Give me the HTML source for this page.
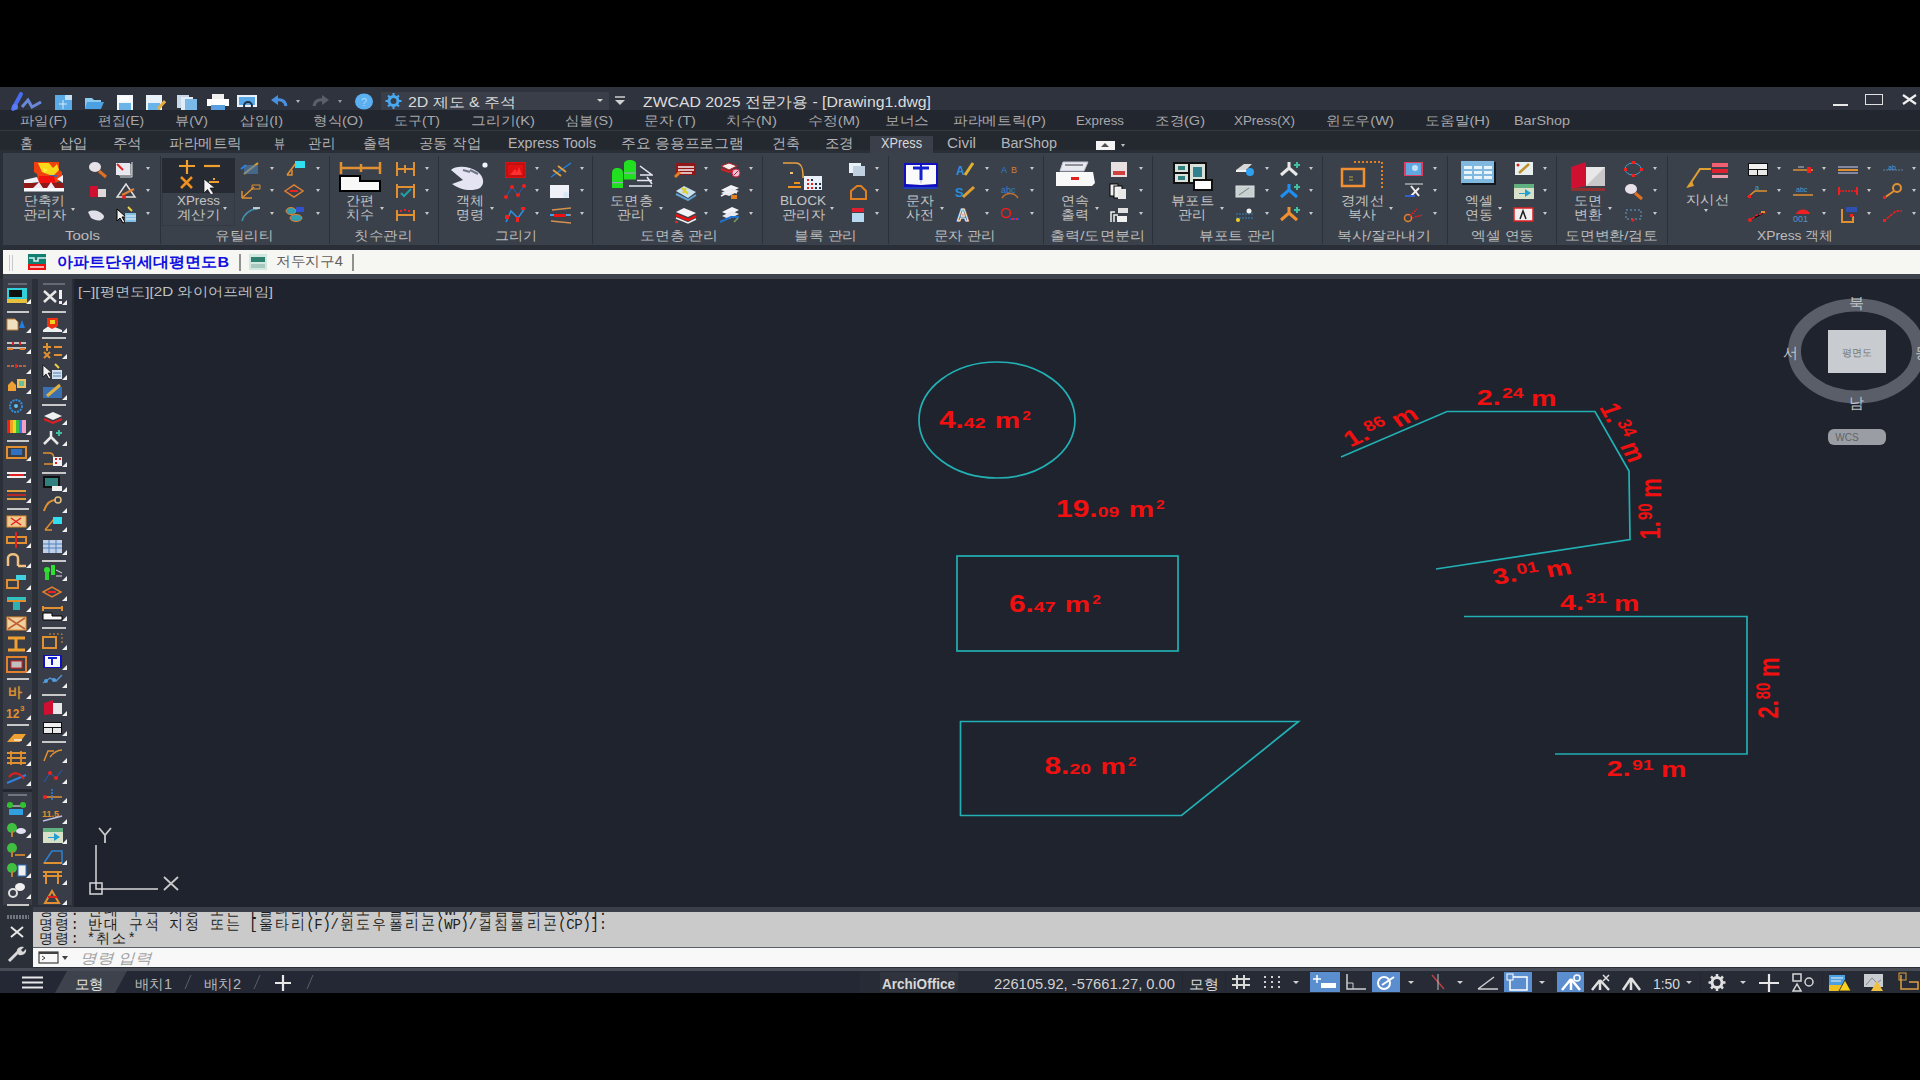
<!DOCTYPE html>
<html><head><meta charset="utf-8"><style>*{margin:0;padding:0;box-sizing:border-box}
html,body{width:1920px;height:1080px;overflow:hidden;background:#000}
body{position:relative;font-family:"Liberation Sans",sans-serif}
.a{position:absolute;display:block}
.t{position:absolute;white-space:nowrap;transform-origin:0 50%}
</style></head><body><div class="a" style="left:0px;top:87px;width:1920px;height:23px;background:#2f333d;"></div><div class="a" style="left:0px;top:110px;width:1920px;height:20px;background:#22262e;"></div><div class="a" style="left:0px;top:130px;width:1920px;height:1px;background:#343a40;"></div><div class="a" style="left:0px;top:131px;width:1920px;height:22px;background:#24282f;"></div><div class="a" style="left:0px;top:150px;width:1920px;height:3px;background:#2a2e36;"></div><div class="a" style="left:0px;top:153px;width:1920px;height:93px;background:#3b414b;"></div><div class="a" style="left:0px;top:153px;width:3px;height:93px;background:#2a2e36;"></div><div class="a" style="left:0px;top:245px;width:1920px;height:5px;background:#2a2e36;"></div><div class="a" style="left:3px;top:250px;width:1917px;height:24px;background:#f6f6f2;"></div><div class="a" style="left:0px;top:250px;width:3px;height:657px;background:#262a32;"></div><div class="a" style="left:3px;top:274px;width:1917px;height:5px;background:#3e424c;"></div><div class="a" style="left:0px;top:279px;width:74px;height:628px;background:#2b2f38;"></div><div class="a" style="left:74px;top:279px;width:1846px;height:628px;background:#1e232d;"></div><div class="a" style="left:0px;top:907px;width:1920px;height:64px;background:#3a3e48;"></div><div class="a" style="left:0px;top:907px;width:33px;height:64px;background:#2b2f38;"></div><div class="a" style="left:33px;top:912px;width:1887px;height:35px;background:#cacaca;"></div><div class="a" style="left:33px;top:947px;width:1887px;height:1px;background:#5a5e66;"></div><div class="a" style="left:33px;top:948px;width:1887px;height:19px;background:#f8f8f8;"></div><div class="a" style="left:0px;top:967px;width:1920px;height:1px;background:#2a2e36;"></div><div class="a" style="left:0px;top:968px;width:1920px;height:3px;background:#484c56;"></div><div class="a" style="left:0px;top:971px;width:1920px;height:22px;background:#232834;"></div><svg class="a" style="left:8px;top:90px;" width="36" height="22" viewBox="0 0 36 22"><path d="M5 19L13 4" stroke="#4a6cf0" stroke-width="4" stroke-linecap="round"/><circle cx="7" cy="17" r="3" fill="#5a7cf8"/><path d="M14 17L20 10L24 17L33 12" stroke="#6a88d8" stroke-width="3" fill="none"/></svg><svg class="a" style="left:55px;top:95px;" width="18" height="15" viewBox="0 0 18 15"><rect x="0" y="0" width="17" height="16" fill="#5aaae8"/><rect x="10" y="0" width="7" height="5" fill="#bfe0f8"/><path d="M8 5V14M4 9H12" stroke="#d8ecf8" stroke-width="1"/></svg><svg class="a" style="left:84px;top:96px;" width="21" height="14" viewBox="0 0 21 14"><path d="M1 2H8L10 4H17V13H1Z" fill="#8ccaf0"/><path d="M3 6H20L17 13H1Z" fill="#4aa0e0"/></svg><svg class="a" style="left:117px;top:95px;" width="17" height="15" viewBox="0 0 17 15"><rect x="0" y="0" width="16" height="16" fill="#f4f8fc"/><rect x="2" y="8" width="12" height="8" fill="#6ab4e8"/><rect x="3" y="1" width="9" height="5" fill="#ffffff"/></svg><svg class="a" style="left:146px;top:95px;" width="20" height="15" viewBox="0 0 20 15"><rect x="0" y="0" width="16" height="16" fill="#e8f0f8"/><rect x="2" y="8" width="12" height="8" fill="#6ab4e8"/><path d="M12 14L19 6" stroke="#e8b040" stroke-width="3"/></svg><svg class="a" style="left:177px;top:95px;" width="21" height="15" viewBox="0 0 21 15"><rect x="0" y="0" width="12" height="13" fill="#c8d8e8"/><rect x="4" y="2" width="12" height="13" fill="#e0ecf8"/><rect x="8" y="4" width="12" height="12" fill="#7ab8e8"/></svg><svg class="a" style="left:207px;top:94px;" width="22" height="16" viewBox="0 0 22 16"><rect x="5" y="0" width="12" height="6" fill="#f0f0f0"/><rect x="0" y="5" width="22" height="7" fill="#ffffff"/><rect x="4" y="11" width="14" height="6" fill="#5aa0e0"/></svg><svg class="a" style="left:237px;top:94px;" width="21" height="17" viewBox="0 0 21 17"><rect x="0" y="1" width="20" height="12" fill="#e8f0f8"/><rect x="2" y="3" width="16" height="8" fill="#5aa8e8"/><circle cx="11" cy="12" r="4" fill="none" stroke="#203040" stroke-width="2"/><path d="M14 15L17 18" stroke="#203040" stroke-width="2"/></svg><svg class="a" style="left:271px;top:94px;" width="17" height="14" viewBox="0 0 17 14"><path d="M15 12C14 6 9 5 5 6" stroke="#4a90e0" stroke-width="3" fill="none"/><path d="M0 6L7 1V11Z" fill="#4a90e0"/></svg><svg class="a" style="left:296px;top:100px;" width="4" height="4" viewBox="0 0 4 4"><path d="M0 0H4L2 3Z" fill="#b8b8b8"/></svg><svg class="a" style="left:312px;top:94px;" width="17" height="14" viewBox="0 0 17 14"><path d="M2 12C3 6 8 5 12 6" stroke="#5a6068" stroke-width="3" fill="none"/><path d="M17 6L10 1V11Z" fill="#5a6068"/></svg><svg class="a" style="left:338px;top:100px;" width="4" height="4" viewBox="0 0 4 4"><path d="M0 0H4L2 3Z" fill="#9a9a9a"/></svg><svg class="a" style="left:354px;top:93px;" width="20" height="17" viewBox="0 0 20 17"><ellipse cx="10" cy="8.5" rx="9" ry="8" fill="#5ab0f0"/><text x="10" y="13" font-size="11" text-anchor="middle" fill="#a0d8ff" font-family="Liberation Sans">?</text></svg><div class="a" style="left:381px;top:92px;width:228px;height:18px;background:#393e48;"></div><svg class="a" style="left:385px;top:93px;" width="17" height="16" viewBox="0 0 17 16"><circle cx="8.5" cy="8" r="4.5" fill="none" stroke="#4aa8f0" stroke-width="3"/><path d="M8.5 0V3M8.5 13V16M0.5 8H3.5M13.5 8H16.5M3 2.5L5 4.5M12 11.5L14 13.5M3 13.5L5 11.5M12 4.5L14 2.5" stroke="#4aa8f0" stroke-width="2"/></svg><svg class="a" style="left:597px;top:99px;" width="6" height="4" viewBox="0 0 6 4"><path d="M0 0H6L3 3Z" fill="#d0d0d0"/></svg><svg class="a" style="left:614px;top:96px;" width="12" height="10" viewBox="0 0 12 10"><path d="M1 1H11" stroke="#d0d0d0" stroke-width="1.5"/><path d="M1 4H11L6 9Z" fill="#d0d0d0"/></svg><div class="a" style="left:1833px;top:104px;width:15px;height:2px;background:#e8e8e8;"></div><div class="a" style="left:1865px;top:94px;width:18px;height:11px;background:transparent;border:1.5px solid #e0e0e0"></div><svg class="a" style="left:1902px;top:94px;" width="15" height="11" viewBox="0 0 15 11"><path d="M1 1L14 10M14 1L1 10" stroke="#f0f0f0" stroke-width="2.2"/></svg><div class="a" style="left:870px;top:136px;width:63px;height:17px;background:#3b3f49;"></div><div class="a" style="left:1096px;top:141px;width:19px;height:9px;background:#f4f4f4;"></div><svg class="a" style="left:1101px;top:143px;" width="9" height="5" viewBox="0 0 9 5"><path d="M0 4H8L4 0Z" fill="#505050"/></svg><svg class="a" style="left:1121px;top:144px;" width="4" height="4" viewBox="0 0 4 4"><path d="M0 0H4L2 3Z" fill="#c0c0c0"/></svg><div class="a" style="left:160px;top:156px;width:1px;height:88px;background:#2c3038;"></div><div class="a" style="left:329px;top:156px;width:1px;height:88px;background:#2c3038;"></div><div class="a" style="left:438px;top:156px;width:1px;height:88px;background:#2c3038;"></div><div class="a" style="left:592px;top:156px;width:1px;height:88px;background:#2c3038;"></div><div class="a" style="left:762px;top:156px;width:1px;height:88px;background:#2c3038;"></div><div class="a" style="left:888px;top:156px;width:1px;height:88px;background:#2c3038;"></div><div class="a" style="left:1043px;top:156px;width:1px;height:88px;background:#2c3038;"></div><div class="a" style="left:1152px;top:156px;width:1px;height:88px;background:#2c3038;"></div><div class="a" style="left:1322px;top:156px;width:1px;height:88px;background:#2c3038;"></div><div class="a" style="left:1447px;top:156px;width:1px;height:88px;background:#2c3038;"></div><div class="a" style="left:1556px;top:156px;width:1px;height:88px;background:#2c3038;"></div><div class="a" style="left:1667px;top:156px;width:1px;height:88px;background:#2c3038;"></div><svg class="a" style="left:23px;top:160px;" width="42" height="32" viewBox="0 0 42 32"><path d="M11 2H36V10L39 12V20L30 24L16 24L14 14L11 12Z" fill="#f04010"/><path d="M15 3H26L30 8L34 4L36 10L30 16L24 14L19 12Z" fill="#f8d818"/><path d="M20 8L25 10L21 13Z" fill="#f8f040"/><rect x="26" y="15" width="8" height="2" fill="#5060a0"/><path d="M16 16H31L33 24H15Z" fill="#f01010"/><path d="M1 20L14 17L16 22L1 24Z" fill="#f0f0f8"/><path d="M34 19L40 15V23Z" fill="#f0f0f8"/><path d="M1 23H41V28H1Z" fill="#901818"/><path d="M10 28L16 22L20 28ZM24 28L28 22L32 28Z" fill="#f0e8f0"/><rect x="1" y="28" width="40" height="3.5" fill="#f8f8ff"/></svg><svg class="a" style="left:71px;top:208px;" width="4" height="4" viewBox="0 0 4 4"><path d="M0 0H4L2 3Z" fill="#c8c8c8"/></svg><div class="a" style="left:162px;top:158px;width:73px;height:35px;background:#262a32;"></div><div class="a" style="left:162px;top:193px;width:73px;height:33px;background:transparent;border:1px solid #343841;border-top:none"></div><svg class="a" style="left:176px;top:160px;" width="46" height="34" viewBox="0 0 46 34"><path d="M3 6H19M11 0V14" stroke="#f0a030" stroke-width="2.2"/><path d="M28 6H44" stroke="#f0a030" stroke-width="2.2"/><path d="M5 17L16 28M16 17L5 28" stroke="#f09020" stroke-width="2.5"/><path d="M33 22H43M37 19h2" stroke="#f0a030" stroke-width="2"/><path d="M28 19L28 33L31.5 29.5L35 35L37.5 33.5L34 28L39 28Z" fill="#f4f4f8" stroke="#101010" stroke-width="0.7"/></svg><svg class="a" style="left:223px;top:207px;" width="4" height="4" viewBox="0 0 4 4"><path d="M0 0H4L2 3Z" fill="#c8c8c8"/></svg><svg class="a" style="left:339px;top:160px;" width="43" height="32" viewBox="0 0 43 32"><path d="M2 2V14M41 2V14M22 4V12M2 8H41" stroke="#e09030" stroke-width="2.5"/><path d="M1 16H21V21H41V31H1Z" fill="#f8f8f8" stroke="#000" stroke-width="2"/></svg><svg class="a" style="left:380px;top:207px;" width="4" height="4" viewBox="0 0 4 4"><path d="M0 0H4L2 3Z" fill="#c8c8c8"/></svg><svg class="a" style="left:450px;top:162px;" width="40" height="30" viewBox="0 0 40 30"><path d="M1 8C6 3 20 4 28 10C34 15 35 22 30 26C22 30 10 28 2 22L13 18Z" fill="#e4e4f2"/><path d="M13 8L20 10M20 8L28 12" stroke="#707888" stroke-width="2"/><circle cx="35" cy="3" r="2.6" fill="#f4f4ff"/></svg><svg class="a" style="left:490px;top:207px;" width="4" height="4" viewBox="0 0 4 4"><path d="M0 0H4L2 3Z" fill="#c8c8c8"/></svg><svg class="a" style="left:611px;top:160px;" width="42" height="30" viewBox="0 0 42 30"><path d="M1 13C1 9 4 8 6 8C9 8 12 9 12 13V28H1Z" fill="#20e020"/><rect x="1" y="22" width="11" height="1.2" fill="#a0a0c0"/><path d="M13 4C13 1 16 0 19 0C22 0 25 1 25 4V19.5H13Z" fill="#20e020"/><rect x="13" y="12.5" width="12" height="1.2" fill="#a0a0c0"/><path d="M29 6L41 15H29M26 20.5H41M36 17L41 24M18 26H41" stroke="#e8e8f4" stroke-width="1.5" fill="none"/></svg><svg class="a" style="left:659px;top:207px;" width="4" height="4" viewBox="0 0 4 4"><path d="M0 0H4L2 3Z" fill="#c8c8c8"/></svg><svg class="a" style="left:782px;top:161px;" width="42" height="31" viewBox="0 0 42 31"><path d="M1 2H14C19 2 21 8 21 14V17" stroke="#e8a040" stroke-width="1.6" fill="none"/><path d="M8 12H11" stroke="#f0c080" stroke-width="2"/><path d="M12 22H18M6 26H19" stroke="#f09020" stroke-width="2"/><rect x="22" y="15" width="18" height="14" fill="#e8f0fc"/><path d="M25 18h2v2h-2zM25 22h2v2h-2zM29 22h2v2h-2zM25 26h2v2h-2zM29 26h2v2h-2z" fill="#f02020"/><path d="M29 18h2v2h-2zM33 22h2v2h-2zM37 22h2v2h-2zM33 26h2v2h-2zM37 26h2v2h-2z" fill="#203040"/></svg><svg class="a" style="left:830px;top:207px;" width="4" height="4" viewBox="0 0 4 4"><path d="M0 0H4L2 3Z" fill="#c8c8c8"/></svg><svg class="a" style="left:903px;top:162px;" width="36" height="28" viewBox="0 0 36 28"><rect x="1" y="1" width="34" height="24" fill="#1010c0"/><path d="M3 3H17L18 23L3 22ZM19 3H33V22L18 23Z" fill="#fafafa"/><path d="M10 6H26M18 6V18" stroke="#1020d0" stroke-width="3"/><path d="M1 26H35" stroke="#2040c0" stroke-width="2"/></svg><svg class="a" style="left:940px;top:207px;" width="4" height="4" viewBox="0 0 4 4"><path d="M0 0H4L2 3Z" fill="#c8c8c8"/></svg><svg class="a" style="left:1055px;top:161px;" width="40" height="26" viewBox="0 0 40 26"><path d="M8 1H33L29 10H5Z" fill="#e8e8f0" stroke="#c0c0d0"/><path d="M10 4H28" stroke="#909098" stroke-width="2"/><path d="M1 11H38L40 22L37 25H1Z" fill="#f8f8f8"/><rect x="16" y="16" width="8" height="3" fill="#e02020"/></svg><svg class="a" style="left:1095px;top:207px;" width="4" height="4" viewBox="0 0 4 4"><path d="M0 0H4L2 3Z" fill="#c8c8c8"/></svg><svg class="a" style="left:1172px;top:161px;" width="42" height="31" viewBox="0 0 42 31"><rect x="1" y="1" width="34" height="22" fill="#101010"/><rect x="3" y="3" width="13" height="8" fill="#d8e0d8"/><rect x="3" y="13" width="13" height="8" fill="#d8e0d8"/><rect x="18" y="3" width="15" height="18" fill="#d8e0d8"/><rect x="6" y="5" width="7" height="4" fill="#308080"/><rect x="6" y="15" width="7" height="4" fill="#308080"/><rect x="21" y="6" width="9" height="10" fill="#308090"/><rect x="21" y="18" width="20" height="12" fill="#101010"/><rect x="23" y="20" width="16" height="8" fill="#ffffff"/></svg><svg class="a" style="left:1220px;top:207px;" width="4" height="4" viewBox="0 0 4 4"><path d="M0 0H4L2 3Z" fill="#c8c8c8"/></svg><svg class="a" style="left:1340px;top:161px;" width="43" height="30" viewBox="0 0 43 30"><path d="M14 1H42V27" stroke="#e08020" stroke-width="2" stroke-dasharray="2 2" fill="none"/><rect x="2" y="8" width="22" height="17" fill="none" stroke="#f09030" stroke-width="2.5"/><path d="M9 16H13M9 19H13" stroke="#c0a040" stroke-width="1"/></svg><svg class="a" style="left:1389px;top:207px;" width="4" height="4" viewBox="0 0 4 4"><path d="M0 0H4L2 3Z" fill="#c8c8c8"/></svg><svg class="a" style="left:1461px;top:161px;" width="37" height="26" viewBox="0 0 37 26"><rect x="1" y="1" width="34" height="23" fill="#101820"/><rect x="0" y="0" width="33" height="22" fill="#80b8e0"/><path d="M3 5h8v3h-8zM13 5h8v3h-8zM23 5h8v3h-8zM3 10h8v3h-8zM13 10h8v3h-8zM23 10h8v3h-8zM3 15h8v3h-8zM13 15h8v3h-8zM23 15h8v3h-8z" fill="#e8f4fc"/></svg><svg class="a" style="left:1498px;top:207px;" width="4" height="4" viewBox="0 0 4 4"><path d="M0 0H4L2 3Z" fill="#c8c8c8"/></svg><svg class="a" style="left:1569px;top:161px;" width="38" height="30" viewBox="0 0 38 30"><path d="M2 6L17 1V25L2 28Z" fill="#d01030"/><path d="M17 6H36V25H17Z" fill="#e8e8e8"/><path d="M17 25L36 6V25Z" fill="#c8c8c8"/><path d="M2 27H36V30H2Z" fill="#903030"/></svg><svg class="a" style="left:1608px;top:207px;" width="4" height="4" viewBox="0 0 4 4"><path d="M0 0H4L2 3Z" fill="#c8c8c8"/></svg><svg class="a" style="left:1685px;top:161px;" width="44" height="29" viewBox="0 0 44 29"><path d="M3 26L15 8H26" stroke="#e0a030" stroke-width="2" fill="none"/><path d="M1 27L7 20L9 25Z" fill="#e0a030"/><rect x="27" y="2" width="16" height="4" fill="#f06070"/><rect x="27" y="8" width="16" height="4" fill="#e02030"/><rect x="27" y="14" width="16" height="3" fill="#f0a0b0"/></svg><svg class="a" style="left:1704px;top:209px;" width="4" height="4" viewBox="0 0 4 4"><path d="M0 0H4L2 3Z" fill="#c8c8c8"/></svg><svg class="a" style="left:87px;top:161px;" width="23" height="18" viewBox="0 0 23 18"><ellipse cx="8" cy="6" rx="6" ry="5" fill="#e8e0e8"/><path d="M12 10L19 16" stroke="#e07020" stroke-width="3"/></svg><svg class="a" style="left:87px;top:183px;" width="23" height="18" viewBox="0 0 23 18"><rect x="3" y="3" width="8" height="11" fill="#d01030"/><rect x="11" y="6" width="8" height="8" fill="#e0d8d8"/></svg><svg class="a" style="left:87px;top:206px;" width="23" height="18" viewBox="0 0 23 18"><path d="M1 6C6 3 14 5 17 10C17 15 10 16 4 12Z" fill="#e0e0e8"/></svg><svg class="a" style="left:116px;top:161px;" width="23" height="18" viewBox="0 0 23 18"><rect x="0" y="2" width="14" height="12" fill="#e8e8f0"/><path d="M1 3L7 9" stroke="#e02020" stroke-width="2"/><path d="M15 3V14H3" stroke="#f0f0f0" stroke-width="1" fill="none"/><path d="M16 1V16H4" stroke="#e0e0e0" stroke-width="1" fill="none"/></svg><svg class="a" style="left:146px;top:167px;" width="4" height="4" viewBox="0 0 4 4"><path d="M0 0H4L2 3Z" fill="#c8c8c8"/></svg><svg class="a" style="left:116px;top:183px;" width="23" height="18" viewBox="0 0 23 18"><path d="M10 1L1 14H19Z" fill="none" stroke="#e0e0e0" stroke-width="1.5"/><path d="M6 12L18 6" stroke="#e08030" stroke-width="2"/><circle cx="8" cy="14" r="2" fill="#e02020"/></svg><svg class="a" style="left:146px;top:189px;" width="4" height="4" viewBox="0 0 4 4"><path d="M0 0H4L2 3Z" fill="#c8c8c8"/></svg><svg class="a" style="left:116px;top:206px;" width="23" height="18" viewBox="0 0 23 18"><path d="M1 3V15L4 12L7 17L9 16L6 11H10Z" fill="#f0f0f0" stroke="#000"/><rect x="9" y="7" width="11" height="9" fill="#80c0e8"/><path d="M10 10H20M10 13H20" stroke="#f0f0f0"/><path d="M12 1L16 5" stroke="#f0d040" stroke-width="2"/></svg><svg class="a" style="left:146px;top:212px;" width="4" height="4" viewBox="0 0 4 4"><path d="M0 0H4L2 3Z" fill="#c8c8c8"/></svg><svg class="a" style="left:240px;top:161px;" width="23" height="18" viewBox="0 0 23 18"><path d="M1 8L6 4" stroke="#2080f0" stroke-width="2"/><path d="M4 13L18 2" stroke="#e0a030" stroke-width="2"/><rect x="4" y="4" width="14" height="9" fill="#5080b0" opacity=".6"/></svg><svg class="a" style="left:270px;top:167px;" width="4" height="4" viewBox="0 0 4 4"><path d="M0 0H4L2 3Z" fill="#c8c8c8"/></svg><svg class="a" style="left:240px;top:183px;" width="23" height="18" viewBox="0 0 23 18"><path d="M2 15L14 4" stroke="#e09030" stroke-width="1.5"/><path d="M2 15H12M2 15V8" stroke="#e09030" stroke-width="1.5" fill="none"/><path d="M12 2H20V6H12Z" fill="none" stroke="#e09030"/></svg><svg class="a" style="left:270px;top:189px;" width="4" height="4" viewBox="0 0 4 4"><path d="M0 0H4L2 3Z" fill="#c8c8c8"/></svg><svg class="a" style="left:240px;top:206px;" width="23" height="18" viewBox="0 0 23 18"><path d="M2 15C4 8 10 3 18 3" stroke="#4090b0" stroke-width="1.5" fill="none"/><path d="M13 2H20" stroke="#f0f0f0" stroke-width="1.5"/></svg><svg class="a" style="left:270px;top:212px;" width="4" height="4" viewBox="0 0 4 4"><path d="M0 0H4L2 3Z" fill="#c8c8c8"/></svg><svg class="a" style="left:284px;top:161px;" width="23" height="18" viewBox="0 0 23 18"><path d="M3 14L12 2" stroke="#e09030" stroke-width="1.5"/><path d="M3 14H8V9" stroke="#e09030" stroke-width="1.5" fill="none"/><rect x="11" y="0" width="10" height="7" fill="#30e0f0"/></svg><svg class="a" style="left:316px;top:167px;" width="4" height="4" viewBox="0 0 4 4"><path d="M0 0H4L2 3Z" fill="#c8c8c8"/></svg><svg class="a" style="left:284px;top:183px;" width="23" height="18" viewBox="0 0 23 18"><path d="M1 8L10 2L19 8L10 14Z" fill="none" stroke="#e08030" stroke-width="1.5"/><path d="M6 8H14" stroke="#f02020" stroke-width="2"/></svg><svg class="a" style="left:316px;top:189px;" width="4" height="4" viewBox="0 0 4 4"><path d="M0 0H4L2 3Z" fill="#c8c8c8"/></svg><svg class="a" style="left:284px;top:206px;" width="23" height="18" viewBox="0 0 23 18"><ellipse cx="7" cy="5" rx="5" ry="3.5" fill="#30a0b0" stroke="#e08030"/><ellipse cx="12" cy="12" rx="6" ry="3.5" fill="#30a0b0" stroke="#e08030"/><rect x="12" y="1" width="8" height="5" fill="#3050d0"/></svg><svg class="a" style="left:316px;top:212px;" width="4" height="4" viewBox="0 0 4 4"><path d="M0 0H4L2 3Z" fill="#c8c8c8"/></svg><svg class="a" style="left:395px;top:161px;" width="23" height="18" viewBox="0 0 23 18"><path d="M2 1V15M19 1V15M2 8H19M10 4V12" stroke="#e09030" stroke-width="2"/></svg><svg class="a" style="left:425px;top:167px;" width="4" height="4" viewBox="0 0 4 4"><path d="M0 0H4L2 3Z" fill="#c8c8c8"/></svg><svg class="a" style="left:395px;top:183px;" width="23" height="18" viewBox="0 0 23 18"><path d="M2 1V15M19 1V15M2 4H19" stroke="#e09030" stroke-width="2"/><path d="M6 10L9 13L16 6" stroke="#20a0a0" stroke-width="2" fill="none"/></svg><svg class="a" style="left:425px;top:189px;" width="4" height="4" viewBox="0 0 4 4"><path d="M0 0H4L2 3Z" fill="#c8c8c8"/></svg><svg class="a" style="left:395px;top:206px;" width="23" height="18" viewBox="0 0 23 18"><path d="M2 4V15M19 4V15M2 9H19" stroke="#e09030" stroke-width="2"/><path d="M5 5h2M9 4h2M13 5h2" stroke="#f02020" stroke-width="2"/></svg><svg class="a" style="left:425px;top:212px;" width="4" height="4" viewBox="0 0 4 4"><path d="M0 0H4L2 3Z" fill="#c8c8c8"/></svg><svg class="a" style="left:504px;top:161px;" width="23" height="18" viewBox="0 0 23 18"><rect x="1" y="1" width="21" height="16" fill="#e01010"/><path d="M6 14L11 8L13 11L15 6L18 14Z" fill="#ff3030"/><rect x="3" y="3" width="17" height="12" fill="none" stroke="#a01010" stroke-width="1"/></svg><svg class="a" style="left:535px;top:167px;" width="4" height="4" viewBox="0 0 4 4"><path d="M0 0H4L2 3Z" fill="#c8c8c8"/></svg><svg class="a" style="left:504px;top:183px;" width="23" height="18" viewBox="0 0 23 18"><path d="M2 14L8 4L14 12L20 3" stroke="#2060c0" stroke-width="1" fill="none"/><circle cx="2" cy="14" r="2" fill="#f02020"/><circle cx="8" cy="4" r="2" fill="#f02020"/><circle cx="14" cy="12" r="2" fill="#f02020"/><circle cx="20" cy="3" r="2" fill="#f02020"/></svg><svg class="a" style="left:535px;top:189px;" width="4" height="4" viewBox="0 0 4 4"><path d="M0 0H4L2 3Z" fill="#c8c8c8"/></svg><svg class="a" style="left:504px;top:206px;" width="23" height="18" viewBox="0 0 23 18"><path d="M2 16L7 5L14 12L21 2" stroke="#3090e0" stroke-width="1.5" fill="none"/><rect x="1" y="9" width="4" height="4" fill="#f02020"/><rect x="12" y="11" width="3" height="5" fill="#f02020"/><rect x="17" y="1" width="4" height="3" fill="#f02020"/></svg><svg class="a" style="left:535px;top:212px;" width="4" height="4" viewBox="0 0 4 4"><path d="M0 0H4L2 3Z" fill="#c8c8c8"/></svg><svg class="a" style="left:549px;top:161px;" width="23" height="18" viewBox="0 0 23 18"><path d="M2 16L22 2" stroke="#2080e0" stroke-width="1.5"/><path d="M4 9L12 15M9 5L17 11" stroke="#e0a040" stroke-width="1.8"/></svg><svg class="a" style="left:580px;top:167px;" width="4" height="4" viewBox="0 0 4 4"><path d="M0 0H4L2 3Z" fill="#c8c8c8"/></svg><svg class="a" style="left:549px;top:183px;" width="23" height="18" viewBox="0 0 23 18"><rect x="1" y="2" width="19" height="13" fill="#f0f0f8"/><circle cx="17" cy="12" r="3" fill="#d8e8f8"/></svg><svg class="a" style="left:580px;top:189px;" width="4" height="4" viewBox="0 0 4 4"><path d="M0 0H4L2 3Z" fill="#c8c8c8"/></svg><svg class="a" style="left:549px;top:206px;" width="23" height="18" viewBox="0 0 23 18"><path d="M3 4L22 2M1 9H22M2 15L22 17" stroke="#d09050" stroke-width="1.5"/><rect x="5" y="8" width="12" height="3" fill="#f01010"/><path d="M1 9h4M17 9h4" stroke="#40a0f0" stroke-width="2"/></svg><svg class="a" style="left:580px;top:212px;" width="4" height="4" viewBox="0 0 4 4"><path d="M0 0H4L2 3Z" fill="#c8c8c8"/></svg><svg class="a" style="left:674px;top:161px;" width="23" height="18" viewBox="0 0 23 18"><rect x="2" y="2" width="20" height="12" fill="#901818"/><path d="M4 6H20M4 9H20M4 12H18" stroke="#f8f0f0" stroke-width="1.5"/><path d="M1 16L6 11" stroke="#e08020" stroke-width="3"/></svg><svg class="a" style="left:704px;top:167px;" width="4" height="4" viewBox="0 0 4 4"><path d="M0 0H4L2 3Z" fill="#c8c8c8"/></svg><svg class="a" style="left:674px;top:183px;" width="23" height="18" viewBox="0 0 23 18"><path d="M2 8L10 3L22 9L14 15Z" fill="#c8e0f0"/><path d="M2 11L14 17L22 12" stroke="#60a0d0" stroke-width="2" fill="none"/><path d="M8 5L14 11M12 5L9 10" stroke="#e0d020" stroke-width="2"/></svg><svg class="a" style="left:704px;top:189px;" width="4" height="4" viewBox="0 0 4 4"><path d="M0 0H4L2 3Z" fill="#c8c8c8"/></svg><svg class="a" style="left:674px;top:206px;" width="23" height="18" viewBox="0 0 23 18"><path d="M2 6L10 2L22 7L14 11Z" fill="#f4f4f8"/><path d="M2 9L14 14L22 10" stroke="#f01010" stroke-width="2.5" fill="none"/><path d="M2 12L14 17L22 13" stroke="#f0f0f0" stroke-width="1.5" fill="none"/><rect x="1" y="15" width="3" height="2" fill="#f02020"/></svg><svg class="a" style="left:704px;top:212px;" width="4" height="4" viewBox="0 0 4 4"><path d="M0 0H4L2 3Z" fill="#c8c8c8"/></svg><svg class="a" style="left:719px;top:161px;" width="23" height="18" viewBox="0 0 23 18"><path d="M2 5L10 2L18 5L10 9Z" fill="#f8f0f0" stroke="#b02020"/><path d="M2 8L10 11L16 9" stroke="#d02020" stroke-width="2" fill="none"/><circle cx="17" cy="12" r="4" fill="#f0c0d0" stroke="#d02040"/><path d="M15 14L19 10" stroke="#a02040"/></svg><svg class="a" style="left:749px;top:167px;" width="4" height="4" viewBox="0 0 4 4"><path d="M0 0H4L2 3Z" fill="#c8c8c8"/></svg><svg class="a" style="left:719px;top:183px;" width="23" height="18" viewBox="0 0 23 18"><path d="M2 7L12 2L20 5L10 10Z" fill="#f4f4f8"/><path d="M2 10L12 5L20 8L10 13Z" fill="#e8e8f0"/><path d="M2 13L12 8L18 10" stroke="#f0f0f0" stroke-width="1.5" fill="none"/><rect x="12" y="12" width="6" height="4" fill="#e08020"/></svg><svg class="a" style="left:749px;top:189px;" width="4" height="4" viewBox="0 0 4 4"><path d="M0 0H4L2 3Z" fill="#c8c8c8"/></svg><svg class="a" style="left:719px;top:206px;" width="23" height="18" viewBox="0 0 23 18"><path d="M3 6L13 1L20 4L10 9Z" fill="#f4f4f8"/><path d="M3 10L13 5L20 8L10 13Z" fill="#e8e8f0"/><path d="M1 16L12 11H20" stroke="#2070d0" stroke-width="2" fill="none"/><path d="M15 16L19 12" stroke="#80a060" stroke-width="1.5"/></svg><svg class="a" style="left:749px;top:212px;" width="4" height="4" viewBox="0 0 4 4"><path d="M0 0H4L2 3Z" fill="#c8c8c8"/></svg><svg class="a" style="left:847px;top:161px;" width="23" height="18" viewBox="0 0 23 18"><rect x="2" y="2" width="12" height="10" fill="#e8f0f8"/><rect x="6" y="5" width="12" height="10" fill="#c0d0e0"/></svg><svg class="a" style="left:875px;top:167px;" width="4" height="4" viewBox="0 0 4 4"><path d="M0 0H4L2 3Z" fill="#c8c8c8"/></svg><svg class="a" style="left:847px;top:183px;" width="23" height="18" viewBox="0 0 23 18"><path d="M4 8L10 3H14L19 8V16H4Z" fill="none" stroke="#e08020" stroke-width="2"/></svg><svg class="a" style="left:875px;top:189px;" width="4" height="4" viewBox="0 0 4 4"><path d="M0 0H4L2 3Z" fill="#c8c8c8"/></svg><svg class="a" style="left:847px;top:206px;" width="23" height="18" viewBox="0 0 23 18"><rect x="5" y="2" width="12" height="4" fill="#e02030"/><rect x="5" y="7" width="12" height="9" fill="#b8d8f0"/></svg><svg class="a" style="left:875px;top:212px;" width="4" height="4" viewBox="0 0 4 4"><path d="M0 0H4L2 3Z" fill="#c8c8c8"/></svg><svg class="a" style="left:955px;top:161px;" width="23" height="18" viewBox="0 0 23 18"><text x="1" y="14" font-size="12" font-family="Liberation Sans" font-weight="bold" fill="#3090e0">A</text><path d="M10 14L18 2" stroke="#e0b030" stroke-width="3"/></svg><svg class="a" style="left:985px;top:167px;" width="4" height="4" viewBox="0 0 4 4"><path d="M0 0H4L2 3Z" fill="#c8c8c8"/></svg><svg class="a" style="left:955px;top:183px;" width="23" height="18" viewBox="0 0 23 18"><text x="0" y="14" font-size="13" font-family="Liberation Sans" font-weight="bold" fill="#2090e0">S</text><path d="M8 14L19 4" stroke="#e0a030" stroke-width="3"/></svg><svg class="a" style="left:985px;top:189px;" width="4" height="4" viewBox="0 0 4 4"><path d="M0 0H4L2 3Z" fill="#c8c8c8"/></svg><svg class="a" style="left:955px;top:206px;" width="23" height="18" viewBox="0 0 23 18"><text x="2" y="15" font-size="16" font-family="Liberation Sans" font-weight="bold" fill="none" stroke="#f0f0f0" stroke-width="1.2">A</text></svg><svg class="a" style="left:985px;top:212px;" width="4" height="4" viewBox="0 0 4 4"><path d="M0 0H4L2 3Z" fill="#c8c8c8"/></svg><svg class="a" style="left:1000px;top:161px;" width="23" height="18" viewBox="0 0 23 18"><text x="1" y="12" font-size="9" font-family="Liberation Sans" fill="#3080d0">A</text><text x="11" y="12" font-size="9" font-family="Liberation Sans" fill="#d08030">B</text></svg><svg class="a" style="left:1030px;top:167px;" width="4" height="4" viewBox="0 0 4 4"><path d="M0 0H4L2 3Z" fill="#c8c8c8"/></svg><svg class="a" style="left:1000px;top:183px;" width="23" height="18" viewBox="0 0 23 18"><text x="1" y="10" font-size="9" font-family="Liberation Sans" fill="#3080d0">abc</text><path d="M2 15C6 9 14 9 18 15" stroke="#c07030" stroke-width="1.5" fill="none"/></svg><svg class="a" style="left:1030px;top:189px;" width="4" height="4" viewBox="0 0 4 4"><path d="M0 0H4L2 3Z" fill="#c8c8c8"/></svg><svg class="a" style="left:1000px;top:206px;" width="23" height="18" viewBox="0 0 23 18"><circle cx="6" cy="7" r="4.5" fill="none" stroke="#f02020" stroke-width="1.5"/><path d="M10 13H19" stroke="#2050d0" stroke-width="2"/><path d="M12 13h2M16 13h2" stroke="#f02020" stroke-width="2"/></svg><svg class="a" style="left:1030px;top:212px;" width="4" height="4" viewBox="0 0 4 4"><path d="M0 0H4L2 3Z" fill="#c8c8c8"/></svg><svg class="a" style="left:1109px;top:161px;" width="23" height="18" viewBox="0 0 23 18"><rect x="2" y="1" width="16" height="15" fill="#e8e0e0"/><rect x="4" y="10" width="12" height="4" fill="#d04040"/></svg><svg class="a" style="left:1139px;top:167px;" width="4" height="4" viewBox="0 0 4 4"><path d="M0 0H4L2 3Z" fill="#c8c8c8"/></svg><svg class="a" style="left:1109px;top:183px;" width="23" height="18" viewBox="0 0 23 18"><rect x="1" y="1" width="8" height="12" fill="#f0f0f0" stroke="#000"/><rect x="5" y="3" width="8" height="12" fill="#f0f0f0" stroke="#000"/><rect x="9" y="6" width="8" height="10" fill="#e8e8e8"/></svg><svg class="a" style="left:1139px;top:189px;" width="4" height="4" viewBox="0 0 4 4"><path d="M0 0H4L2 3Z" fill="#c8c8c8"/></svg><svg class="a" style="left:1109px;top:206px;" width="23" height="18" viewBox="0 0 23 18"><path d="M2 16V6H6M5 16V9H9" stroke="#f0f0f0" stroke-width="1.5" fill="none"/><rect x="9" y="2" width="10" height="5" fill="#e0e0e0"/><rect x="8" y="10" width="10" height="6" fill="#f0f0f0"/></svg><svg class="a" style="left:1139px;top:212px;" width="4" height="4" viewBox="0 0 4 4"><path d="M0 0H4L2 3Z" fill="#c8c8c8"/></svg><svg class="a" style="left:1234px;top:161px;" width="23" height="18" viewBox="0 0 23 18"><path d="M2 9L10 3H18L12 9Z" fill="#d8d8d8"/><path d="M2 10H14" stroke="#f0f0f0" stroke-width="2"/><circle cx="16" cy="11" r="4" fill="#30a0f0"/></svg><svg class="a" style="left:1265px;top:167px;" width="4" height="4" viewBox="0 0 4 4"><path d="M0 0H4L2 3Z" fill="#c8c8c8"/></svg><svg class="a" style="left:1234px;top:183px;" width="23" height="18" viewBox="0 0 23 18"><rect x="2" y="3" width="18" height="11" fill="#c8d0d0" stroke="#e0e0e0"/><path d="M5 12L15 5" stroke="#708080"/></svg><svg class="a" style="left:1265px;top:189px;" width="4" height="4" viewBox="0 0 4 4"><path d="M0 0H4L2 3Z" fill="#c8c8c8"/></svg><svg class="a" style="left:1234px;top:206px;" width="23" height="18" viewBox="0 0 23 18"><path d="M2 8H20M2 12H20" stroke="#3070a0" stroke-width="1.5" stroke-dasharray="2 1"/><circle cx="4" cy="14" r="2" fill="#f0d020"/><circle cx="15" cy="5" r="2.5" fill="#f0f0f0"/></svg><svg class="a" style="left:1265px;top:212px;" width="4" height="4" viewBox="0 0 4 4"><path d="M0 0H4L2 3Z" fill="#c8c8c8"/></svg><svg class="a" style="left:1279px;top:161px;" width="23" height="18" viewBox="0 0 23 18"><path d="M10 7L2 14M10 7L18 14M10 7V1" stroke="#e8e8e8" stroke-width="3"/><path d="M15 4H21M18 1V7" stroke="#40c0a0" stroke-width="2"/></svg><svg class="a" style="left:1309px;top:167px;" width="4" height="4" viewBox="0 0 4 4"><path d="M0 0H4L2 3Z" fill="#c8c8c8"/></svg><svg class="a" style="left:1279px;top:183px;" width="23" height="18" viewBox="0 0 23 18"><path d="M10 7L2 14M10 7L18 14M10 7V1" stroke="#2090f0" stroke-width="3"/><path d="M15 4H21M18 1V7" stroke="#40c0a0" stroke-width="2"/></svg><svg class="a" style="left:1309px;top:189px;" width="4" height="4" viewBox="0 0 4 4"><path d="M0 0H4L2 3Z" fill="#c8c8c8"/></svg><svg class="a" style="left:1279px;top:206px;" width="23" height="18" viewBox="0 0 23 18"><path d="M10 7L2 14M10 7L18 14M10 7V1" stroke="#f09030" stroke-width="3"/><path d="M15 4H21M18 1V7" stroke="#40c0a0" stroke-width="2"/></svg><svg class="a" style="left:1309px;top:212px;" width="4" height="4" viewBox="0 0 4 4"><path d="M0 0H4L2 3Z" fill="#c8c8c8"/></svg><svg class="a" style="left:1403px;top:161px;" width="23" height="18" viewBox="0 0 23 18"><rect x="1" y="1" width="19" height="14" fill="#e04060"/><rect x="3" y="2" width="15" height="12" fill="#60a8e0"/><circle cx="12" cy="7" r="3" fill="#c0e0f8"/></svg><svg class="a" style="left:1433px;top:167px;" width="4" height="4" viewBox="0 0 4 4"><path d="M0 0H4L2 3Z" fill="#c8c8c8"/></svg><svg class="a" style="left:1403px;top:183px;" width="23" height="18" viewBox="0 0 23 18"><path d="M2 1H20" stroke="#e0e0e0"/><path d="M8 3L16 13M16 5L8 13" stroke="#f0f0f0" stroke-width="2"/><path d="M2 13H12" stroke="#3060d0" stroke-width="2"/></svg><svg class="a" style="left:1433px;top:189px;" width="4" height="4" viewBox="0 0 4 4"><path d="M0 0H4L2 3Z" fill="#c8c8c8"/></svg><svg class="a" style="left:1403px;top:206px;" width="23" height="18" viewBox="0 0 23 18"><circle cx="5" cy="12" r="3.5" fill="none" stroke="#e08030" stroke-width="1.5"/><path d="M7 10L14 3M9 12L19 9" stroke="#e02020" stroke-width="1.5" stroke-dasharray="2 1"/></svg><svg class="a" style="left:1433px;top:212px;" width="4" height="4" viewBox="0 0 4 4"><path d="M0 0H4L2 3Z" fill="#c8c8c8"/></svg><svg class="a" style="left:1513px;top:161px;" width="23" height="18" viewBox="0 0 23 18"><rect x="2" y="1" width="18" height="13" fill="#e8f0f0"/><path d="M6 12L16 3" stroke="#c09030" stroke-width="2.5"/><circle cx="5" cy="4" r="1.5" fill="#e02020"/></svg><svg class="a" style="left:1543px;top:167px;" width="4" height="4" viewBox="0 0 4 4"><path d="M0 0H4L2 3Z" fill="#c8c8c8"/></svg><svg class="a" style="left:1513px;top:183px;" width="23" height="18" viewBox="0 0 23 18"><rect x="1" y="1" width="20" height="15" fill="#d8e0c8"/><rect x="1" y="1" width="20" height="4" fill="#60b080"/><path d="M6 10H12V6L18 10L12 14V11H6Z" fill="#20a0d0"/></svg><svg class="a" style="left:1543px;top:189px;" width="4" height="4" viewBox="0 0 4 4"><path d="M0 0H4L2 3Z" fill="#c8c8c8"/></svg><svg class="a" style="left:1513px;top:206px;" width="23" height="18" viewBox="0 0 23 18"><rect x="1" y="2" width="19" height="13" fill="#f0f0f0" stroke="#e02020" stroke-width="1.5"/><path d="M7 13L10 5L13 13" stroke="#202020" stroke-width="1.5" fill="none"/></svg><svg class="a" style="left:1543px;top:212px;" width="4" height="4" viewBox="0 0 4 4"><path d="M0 0H4L2 3Z" fill="#c8c8c8"/></svg><svg class="a" style="left:1623px;top:161px;" width="23" height="18" viewBox="0 0 23 18"><ellipse cx="10" cy="8" rx="8" ry="6" fill="none" stroke="#40a0d0" stroke-width="1"/><rect x="9" y="0" width="3" height="3" fill="#f02020"/><rect x="9" y="13" width="3" height="3" fill="#f02020"/><rect x="1" y="7" width="3" height="3" fill="#f02020"/><rect x="17" y="7" width="3" height="3" fill="#f02020"/></svg><svg class="a" style="left:1653px;top:167px;" width="4" height="4" viewBox="0 0 4 4"><path d="M0 0H4L2 3Z" fill="#c8c8c8"/></svg><svg class="a" style="left:1623px;top:183px;" width="23" height="18" viewBox="0 0 23 18"><ellipse cx="8" cy="6" rx="6" ry="5" fill="#e8e0e8"/><path d="M12 10L19 16" stroke="#e07020" stroke-width="3"/></svg><svg class="a" style="left:1653px;top:189px;" width="4" height="4" viewBox="0 0 4 4"><path d="M0 0H4L2 3Z" fill="#c8c8c8"/></svg><svg class="a" style="left:1623px;top:206px;" width="23" height="18" viewBox="0 0 23 18"><path d="M3 4H18V13H3Z" stroke="#60a0d0" stroke-width="1" stroke-dasharray="2 2" fill="none"/><circle cx="10" cy="14" r="1.5" fill="#f02020"/></svg><svg class="a" style="left:1653px;top:212px;" width="4" height="4" viewBox="0 0 4 4"><path d="M0 0H4L2 3Z" fill="#c8c8c8"/></svg><svg class="a" style="left:1747px;top:161px;" width="23" height="18" viewBox="0 0 23 18"><rect x="1" y="2" width="20" height="13" fill="#101010"/><rect x="2" y="3" width="18" height="5" fill="#f0f0f0"/><rect x="2" y="9" width="8" height="5" fill="#e8e8e8"/><rect x="11" y="9" width="9" height="5" fill="#e8e8e8"/></svg><svg class="a" style="left:1777px;top:167px;" width="4" height="4" viewBox="0 0 4 4"><path d="M0 0H4L2 3Z" fill="#c8c8c8"/></svg><svg class="a" style="left:1747px;top:183px;" width="23" height="18" viewBox="0 0 23 18"><path d="M1 14L8 8H20" stroke="#e09030" stroke-width="1.5" fill="none"/><rect x="1" y="12" width="3" height="3" fill="#f02020"/><text x="8" y="7" font-size="7" fill="#40a0d0" font-family="Liberation Sans">a</text></svg><svg class="a" style="left:1777px;top:189px;" width="4" height="4" viewBox="0 0 4 4"><path d="M0 0H4L2 3Z" fill="#c8c8c8"/></svg><svg class="a" style="left:1747px;top:206px;" width="23" height="18" viewBox="0 0 23 18"><path d="M2 15L10 9L20 6" stroke="#f02020" stroke-width="1.5" stroke-dasharray="3 1"/><circle cx="3" cy="14" r="2" fill="#f02020"/><path d="M14 6h4" stroke="#e09030" stroke-width="2"/></svg><svg class="a" style="left:1777px;top:212px;" width="4" height="4" viewBox="0 0 4 4"><path d="M0 0H4L2 3Z" fill="#c8c8c8"/></svg><svg class="a" style="left:1792px;top:161px;" width="23" height="18" viewBox="0 0 23 18"><path d="M1 9H21" stroke="#e09030" stroke-width="1.5"/><rect x="15" y="6" width="4" height="6" fill="#f02020"/><path d="M6 6h6" stroke="#c0c0c0"/></svg><svg class="a" style="left:1822px;top:167px;" width="4" height="4" viewBox="0 0 4 4"><path d="M0 0H4L2 3Z" fill="#c8c8c8"/></svg><svg class="a" style="left:1792px;top:183px;" width="23" height="18" viewBox="0 0 23 18"><path d="M1 12H21" stroke="#e09030" stroke-width="1.5"/><text x="4" y="9" font-size="7" fill="#40a0d0" font-family="Liberation Sans">abc</text></svg><svg class="a" style="left:1822px;top:189px;" width="4" height="4" viewBox="0 0 4 4"><path d="M0 0H4L2 3Z" fill="#c8c8c8"/></svg><svg class="a" style="left:1792px;top:206px;" width="23" height="18" viewBox="0 0 23 18"><path d="M4 8C6 2 16 2 18 8Z" fill="#f02020"/><text x="1" y="16" font-size="9" fill="#5090d0" font-family="Liberation Sans">001</text></svg><svg class="a" style="left:1822px;top:212px;" width="4" height="4" viewBox="0 0 4 4"><path d="M0 0H4L2 3Z" fill="#c8c8c8"/></svg><svg class="a" style="left:1837px;top:161px;" width="23" height="18" viewBox="0 0 23 18"><path d="M1 6H21M1 12H21" stroke="#a0a0c0" stroke-width="1.5"/><path d="M1 9H21" stroke="#e09030" stroke-width="2"/></svg><svg class="a" style="left:1867px;top:167px;" width="4" height="4" viewBox="0 0 4 4"><path d="M0 0H4L2 3Z" fill="#c8c8c8"/></svg><svg class="a" style="left:1837px;top:183px;" width="23" height="18" viewBox="0 0 23 18"><path d="M2 8H20" stroke="#f02020" stroke-width="1.5" stroke-dasharray="2 1"/><path d="M2 4V12M20 4V12" stroke="#f02020" stroke-width="2"/></svg><svg class="a" style="left:1867px;top:189px;" width="4" height="4" viewBox="0 0 4 4"><path d="M0 0H4L2 3Z" fill="#c8c8c8"/></svg><svg class="a" style="left:1837px;top:206px;" width="23" height="18" viewBox="0 0 23 18"><path d="M5 3V16H16V10" stroke="#e09030" stroke-width="2" fill="none"/><rect x="9" y="1" width="11" height="5" fill="#3050b0"/><rect x="13" y="8" width="3" height="3" fill="#f02020"/></svg><svg class="a" style="left:1867px;top:212px;" width="4" height="4" viewBox="0 0 4 4"><path d="M0 0H4L2 3Z" fill="#c8c8c8"/></svg><svg class="a" style="left:1882px;top:161px;" width="23" height="18" viewBox="0 0 23 18"><path d="M1 9H21" stroke="#6080a0" stroke-width="1" stroke-dasharray="2 1"/><text x="6" y="9" font-size="7" fill="#40a0d0" font-family="Liberation Sans">ab</text></svg><svg class="a" style="left:1912px;top:167px;" width="4" height="4" viewBox="0 0 4 4"><path d="M0 0H4L2 3Z" fill="#c8c8c8"/></svg><svg class="a" style="left:1882px;top:183px;" width="23" height="18" viewBox="0 0 23 18"><circle cx="15" cy="5" r="4" fill="none" stroke="#e09030" stroke-width="2"/><path d="M12 8L2 15" stroke="#e09030" stroke-width="2"/><rect x="1" y="13" width="3" height="3" fill="#f02020"/></svg><svg class="a" style="left:1912px;top:189px;" width="4" height="4" viewBox="0 0 4 4"><path d="M0 0H4L2 3Z" fill="#c8c8c8"/></svg><svg class="a" style="left:1882px;top:206px;" width="23" height="18" viewBox="0 0 23 18"><path d="M2 15L14 5H20" stroke="#f02020" stroke-width="1.5" fill="none" stroke-dasharray="3 1"/><rect x="1" y="13" width="3" height="3" fill="#f02020"/></svg><svg class="a" style="left:1912px;top:212px;" width="4" height="4" viewBox="0 0 4 4"><path d="M0 0H4L2 3Z" fill="#c8c8c8"/></svg><svg class="a" style="left:8px;top:254px;" width="8" height="18" viewBox="0 0 8 18"><path d="M1.5 1V17M4.5 1V17" stroke="#c8c8d0" stroke-width="1"/></svg><svg class="a" style="left:28px;top:254px;" width="19" height="16" viewBox="0 0 19 16"><rect x="0" y="0" width="18" height="10" fill="#108070"/><path d="M1 4H6V7H10V4H18" stroke="#e0f0f0" stroke-width="1.5" fill="none"/><rect x="0" y="10" width="18" height="6" fill="#f01010"/><rect x="2" y="12" width="14" height="2" fill="#f8b0b0"/></svg><div class="a" style="left:239px;top:254px;width:2px;height:17px;background:#909090;"></div><svg class="a" style="left:249px;top:254px;" width="18" height="16" viewBox="0 0 18 16"><rect x="0" y="0" width="18" height="16" fill="#d0e8e0"/><rect x="2" y="3" width="14" height="5" fill="#308070"/><rect x="2" y="10" width="14" height="4" fill="#a8c8c0"/></svg><div class="a" style="left:352px;top:254px;width:2px;height:17px;background:#909090;"></div><div class="a" style="left:3px;top:279px;width:29px;height:626px;background:#393d47;"></div><div class="a" style="left:38px;top:279px;width:34px;height:626px;background:#393d47;"></div><div class="a" style="left:72px;top:279px;width:2px;height:628px;background:#2a2e36;"></div><div class="a" style="left:8px;top:283px;width:19px;height:2px;background:#70747c;opacity:.8"></div><div class="a" style="left:43px;top:283px;width:22px;height:2px;background:#70747c;opacity:.8"></div><svg class="a" style="left:6px;top:287px;" width="26" height="18" viewBox="0 0 26 18"><rect x="1" y="1" width="20" height="12" fill="#30d0d8"/><rect x="3" y="3" width="13" height="7" fill="#101010"/><rect x="1" y="12" width="20" height="4" fill="#e8c040"/><path d="M20 17H25V12Z" fill="#f0f0f0"/></svg><svg class="a" style="left:6px;top:316px;" width="26" height="18" viewBox="0 0 26 18"><path d="M1 3H9L12 6V14H1Z" fill="#f0e0c0" stroke="#c08040"/><path d="M16 4L13 12H19Z" fill="#2080e0"/><path d="M20 17H25V12Z" fill="#f0f0f0"/></svg><svg class="a" style="left:6px;top:337px;" width="26" height="18" viewBox="0 0 26 18"><path d="M1 6H20M1 11H20" stroke="#f0f0f0" stroke-width="1.5"/><path d="M7 5V8M14 5V8" stroke="#e02020" stroke-width="2"/><path d="M1 12H7M14 12H19" stroke="#e08030" stroke-width="2"/><path d="M20 17H25V12Z" fill="#f0f0f0"/></svg><svg class="a" style="left:6px;top:357px;" width="26" height="18" viewBox="0 0 26 18"><path d="M1 9H20" stroke="#e07040" stroke-width="1.5" stroke-dasharray="3 1"/><path d="M10 7V11" stroke="#e02020" stroke-width="2"/><path d="M20 17H25V12Z" fill="#f0f0f0"/></svg><svg class="a" style="left:6px;top:377px;" width="26" height="18" viewBox="0 0 26 18"><path d="M2 14V8L6 4L10 8V14Z" fill="#f0a030"/><rect x="11" y="2" width="9" height="9" fill="#f0c060"/><rect x="13" y="4" width="5" height="5" fill="#60c0a0"/><path d="M20 17H25V12Z" fill="#f0f0f0"/></svg><svg class="a" style="left:6px;top:397px;" width="26" height="18" viewBox="0 0 26 18"><circle cx="10" cy="9" r="6" fill="none" stroke="#3090e0" stroke-width="2" stroke-dasharray="2 1"/><circle cx="10" cy="9" r="2" fill="#60c0f0"/><path d="M20 17H25V12Z" fill="#f0f0f0"/></svg><svg class="a" style="left:6px;top:418px;" width="26" height="18" viewBox="0 0 26 18"><rect x="1" y="2" width="3" height="13" fill="#f02020"/><rect x="4" y="2" width="3" height="13" fill="#f0a020"/><rect x="7" y="2" width="3" height="13" fill="#e0e020"/><rect x="10" y="2" width="3" height="13" fill="#40c040"/><rect x="13" y="2" width="3" height="13" fill="#3080f0"/><rect x="16" y="2" width="4" height="13" fill="#f0a0c0"/><path d="M20 17H25V12Z" fill="#f0f0f0"/></svg><svg class="a" style="left:6px;top:444px;" width="26" height="18" viewBox="0 0 26 18"><rect x="1" y="3" width="19" height="11" fill="none" stroke="#e09030" stroke-width="2"/><rect x="5" y="5" width="11" height="6" fill="#3070c0"/><path d="M20 17H25V12Z" fill="#f0f0f0"/></svg><svg class="a" style="left:6px;top:466px;" width="26" height="18" viewBox="0 0 26 18"><path d="M1 7H20M1 11H20" stroke="#f0f0f0" stroke-width="2"/><path d="M3 9H18" stroke="#e02020" stroke-width="2"/><path d="M20 17H25V12Z" fill="#f0f0f0"/></svg><svg class="a" style="left:6px;top:486px;" width="26" height="18" viewBox="0 0 26 18"><path d="M1 5H20M1 13H20" stroke="#e0a040" stroke-width="2"/><path d="M1 9H20" stroke="#e02020" stroke-width="1.5"/><path d="M20 17H25V12Z" fill="#f0f0f0"/></svg><svg class="a" style="left:6px;top:513px;" width="26" height="18" viewBox="0 0 26 18"><rect x="1" y="3" width="19" height="11" fill="#f0c890" stroke="#e09030"/><path d="M5 5L15 12M15 5L5 12" stroke="#e02020" stroke-width="1.5"/><path d="M20 17H25V12Z" fill="#f0f0f0"/></svg><svg class="a" style="left:6px;top:531px;" width="26" height="18" viewBox="0 0 26 18"><rect x="1" y="6" width="19" height="6" fill="none" stroke="#e09030" stroke-width="2"/><path d="M10 1V17" stroke="#e02020" stroke-width="2"/><path d="M20 17H25V12Z" fill="#f0f0f0"/></svg><svg class="a" style="left:6px;top:551px;" width="26" height="18" viewBox="0 0 26 18"><path d="M2 15V7C2 2 12 2 12 7V15M12 15H20" stroke="#f0c080" stroke-width="2.5" fill="none"/><path d="M20 17H25V12Z" fill="#f0f0f0"/></svg><svg class="a" style="left:6px;top:573px;" width="26" height="18" viewBox="0 0 26 18"><rect x="1" y="7" width="11" height="8" fill="none" stroke="#e09030" stroke-width="2"/><rect x="10" y="2" width="10" height="5" fill="#40d0e0"/><path d="M20 17H25V12Z" fill="#f0f0f0"/></svg><svg class="a" style="left:6px;top:595px;" width="26" height="18" viewBox="0 0 26 18"><rect x="1" y="2" width="19" height="4" fill="#30c0c0"/><rect x="7" y="6" width="7" height="9" fill="#30b0b0"/><path d="M1 6H20" stroke="#e09030" stroke-width="2"/><path d="M20 17H25V12Z" fill="#f0f0f0"/></svg><svg class="a" style="left:6px;top:615px;" width="26" height="18" viewBox="0 0 26 18"><rect x="1" y="2" width="19" height="13" fill="#f0d0a0" stroke="#e09030"/><path d="M2 3L19 14M19 3L2 14" stroke="#c06030" stroke-width="1.5"/><path d="M20 17H25V12Z" fill="#f0f0f0"/></svg><svg class="a" style="left:6px;top:635px;" width="26" height="18" viewBox="0 0 26 18"><path d="M2 3H19M2 15H19M10 3V15" stroke="#f0a030" stroke-width="3"/><path d="M20 17H25V12Z" fill="#f0f0f0"/></svg><svg class="a" style="left:6px;top:656px;" width="26" height="18" viewBox="0 0 26 18"><rect x="1" y="1" width="19" height="15" fill="none" stroke="#e08030" stroke-width="2"/><rect x="5" y="5" width="11" height="7" fill="#c0c0c0" stroke="#e02020"/><path d="M20 17H25V12Z" fill="#f0f0f0"/></svg><svg class="a" style="left:6px;top:682px;" width="26" height="18" viewBox="0 0 26 18"><text x="2" y="15" font-size="14" font-family="Liberation Sans" font-weight="bold" fill="#e09030">바</text><path d="M20 17H25V12Z" fill="#f0f0f0"/></svg><svg class="a" style="left:6px;top:703px;" width="26" height="18" viewBox="0 0 26 18"><text x="0" y="15" font-size="12" font-family="Liberation Sans" font-weight="bold" fill="#e09030">12</text><text x="14" y="8" font-size="8" font-family="Liberation Sans" font-weight="bold" fill="#e09030">3</text><path d="M20 17H25V12Z" fill="#f0f0f0"/></svg><svg class="a" style="left:6px;top:729px;" width="26" height="18" viewBox="0 0 26 18"><path d="M1 13L8 5H20L14 13Z" fill="#f0a030"/><path d="M8 11H16" stroke="#f0f0f0" stroke-width="1.5"/><path d="M20 17H25V12Z" fill="#f0f0f0"/></svg><svg class="a" style="left:6px;top:749px;" width="26" height="18" viewBox="0 0 26 18"><path d="M1 4H20M1 9H20M1 14H20M5 2V16M15 2V16" stroke="#e09030" stroke-width="1.8"/><path d="M20 17H25V12Z" fill="#f0f0f0"/></svg><svg class="a" style="left:6px;top:769px;" width="26" height="18" viewBox="0 0 26 18"><path d="M1 14L20 6" stroke="#3080e0" stroke-width="2"/><path d="M3 8C8 2 14 4 18 10" stroke="#e02020" stroke-width="2" fill="none"/><path d="M20 17H25V12Z" fill="#f0f0f0"/></svg><svg class="a" style="left:6px;top:800px;" width="26" height="18" viewBox="0 0 26 18"><path d="M1 6H20" stroke="#f0f0f0"/><circle cx="4" cy="5" r="3" fill="#30c030"/><circle cx="17" cy="5" r="3" fill="#30c030"/><rect x="3" y="9" width="14" height="6" fill="#30a0e0"/><path d="M20 17H25V12Z" fill="#f0f0f0"/></svg><svg class="a" style="left:6px;top:821px;" width="26" height="18" viewBox="0 0 26 18"><circle cx="6" cy="7" r="5" fill="#40c040"/><path d="M6 10V16" stroke="#c08030" stroke-width="2"/><ellipse cx="15" cy="10" rx="5" ry="3" fill="#e0e0f0"/><path d="M20 17H25V12Z" fill="#f0f0f0"/></svg><svg class="a" style="left:6px;top:841px;" width="26" height="18" viewBox="0 0 26 18"><circle cx="6" cy="7" r="5" fill="#40c040"/><path d="M6 10V16M9 14H19" stroke="#c08030" stroke-width="2"/><path d="M20 17H25V12Z" fill="#f0f0f0"/></svg><svg class="a" style="left:6px;top:861px;" width="26" height="18" viewBox="0 0 26 18"><circle cx="6" cy="7" r="5" fill="#40c040"/><path d="M6 10V16" stroke="#c08030" stroke-width="2"/><rect x="12" y="4" width="8" height="11" fill="#f0f0f0" stroke="#3070c0"/><path d="M20 17H25V12Z" fill="#f0f0f0"/></svg><svg class="a" style="left:6px;top:882px;" width="26" height="18" viewBox="0 0 26 18"><circle cx="7" cy="11" r="4" fill="none" stroke="#e0e0e0" stroke-width="2"/><ellipse cx="14" cy="5" rx="5" ry="4" fill="#f0f0f0"/><path d="M20 17H25V12Z" fill="#f0f0f0"/></svg><div class="a" style="left:7px;top:311px;width:22px;height:2px;background:#c8c8c8;"></div><div class="a" style="left:7px;top:440px;width:22px;height:2px;background:#c8c8c8;"></div><div class="a" style="left:7px;top:508px;width:22px;height:2px;background:#c8c8c8;"></div><div class="a" style="left:7px;top:678px;width:22px;height:2px;background:#c8c8c8;"></div><div class="a" style="left:7px;top:724px;width:22px;height:2px;background:#c8c8c8;"></div><div class="a" style="left:7px;top:904px;width:22px;height:2px;background:#c8c8c8;"></div><svg class="a" style="left:42px;top:288px;" width="26" height="18" viewBox="0 0 26 18"><path d="M2 3L14 14M14 3L2 14" stroke="#e8e8e8" stroke-width="2.5"/><rect x="17" y="2" width="3" height="9" fill="#f0f0f0"/><rect x="17" y="13" width="3" height="3" fill="#f0f0f0"/><path d="M20 17H25V12Z" fill="#f0f0f0"/></svg><svg class="a" style="left:42px;top:316px;" width="26" height="18" viewBox="0 0 26 18"><path d="M1 14L8 9L20 14V16H1Z" fill="#f0f0f0"/><path d="M5 2H16V10L10 13L5 10Z" fill="#f03010"/><path d="M8 4H13V8H8Z" fill="#f0d020"/><path d="M20 17H25V12Z" fill="#f0f0f0"/></svg><svg class="a" style="left:42px;top:342px;" width="26" height="18" viewBox="0 0 26 18"><path d="M5 1V9M1 5H9M12 5H20" stroke="#e09030" stroke-width="2"/><path d="M2 10L8 16M8 10L2 16M12 13H20" stroke="#e09030" stroke-width="2"/><path d="M20 17H25V12Z" fill="#f0f0f0"/></svg><svg class="a" style="left:42px;top:363px;" width="26" height="18" viewBox="0 0 26 18"><path d="M1 2V14L4 11L7 16L9 15L6 10H10Z" fill="#f0f0f0" stroke="#000" stroke-width=".7"/><rect x="10" y="7" width="10" height="9" fill="#d0e0f0"/><path d="M11 10H19M11 13H19" stroke="#5080b0"/><path d="M13 1L17 5" stroke="#f0d040" stroke-width="2"/><path d="M20 17H25V12Z" fill="#f0f0f0"/></svg><svg class="a" style="left:42px;top:383px;" width="26" height="18" viewBox="0 0 26 18"><rect x="1" y="4" width="19" height="11" fill="#3a70b0"/><path d="M5 13L18 2" stroke="#e0b040" stroke-width="3"/><path d="M20 17H25V12Z" fill="#f0f0f0"/></svg><svg class="a" style="left:42px;top:408px;" width="26" height="18" viewBox="0 0 26 18"><path d="M2 8L11 4L20 8L11 12Z" fill="#f0f0f0"/><path d="M2 11L11 15L20 11" stroke="#e02020" stroke-width="2" fill="none"/><path d="M20 17H25V12Z" fill="#f0f0f0"/></svg><svg class="a" style="left:42px;top:429px;" width="26" height="18" viewBox="0 0 26 18"><path d="M9 8L2 15M9 8L16 15M9 8V2" stroke="#e8e8e8" stroke-width="2.5"/><path d="M14 4H20M17 1V7" stroke="#40c0a0" stroke-width="2"/><path d="M20 17H25V12Z" fill="#f0f0f0"/></svg><svg class="a" style="left:42px;top:450px;" width="26" height="18" viewBox="0 0 26 18"><path d="M1 3H8C11 3 12 7 12 10M2 14H12" stroke="#e09030" stroke-width="1.5" fill="none"/><rect x="11" y="7" width="9" height="9" fill="#f0f0f0"/><path d="M13 9h2M17 9h2M13 13h2" stroke="#e02020" stroke-width="2"/><path d="M20 17H25V12Z" fill="#f0f0f0"/></svg><svg class="a" style="left:42px;top:475px;" width="26" height="18" viewBox="0 0 26 18"><rect x="1" y="1" width="17" height="12" fill="#101010"/><rect x="3" y="3" width="13" height="8" fill="#308080"/><rect x="10" y="11" width="10" height="5" fill="#f0f0f0"/><path d="M20 17H25V12Z" fill="#f0f0f0"/></svg><svg class="a" style="left:42px;top:496px;" width="26" height="18" viewBox="0 0 26 18"><path d="M2 15C4 8 8 4 14 4" stroke="#e09030" stroke-width="2" fill="none"/><circle cx="16" cy="4" r="3" fill="none" stroke="#e0c080" stroke-width="1.5"/><path d="M20 17H25V12Z" fill="#f0f0f0"/></svg><svg class="a" style="left:42px;top:515px;" width="26" height="18" viewBox="0 0 26 18"><path d="M3 15L12 4" stroke="#e09030" stroke-width="1.5"/><path d="M3 15H10" stroke="#e09030" stroke-width="1.5"/><rect x="11" y="2" width="9" height="7" fill="#30e0f0"/><path d="M20 17H25V12Z" fill="#f0f0f0"/></svg><svg class="a" style="left:42px;top:538px;" width="26" height="18" viewBox="0 0 26 18"><rect x="1" y="2" width="19" height="13" fill="#c0d0e8"/><path d="M1 6H20M1 10H20M7 2V15M14 2V15" stroke="#5080c0"/><path d="M20 17H25V12Z" fill="#f0f0f0"/></svg><svg class="a" style="left:42px;top:564px;" width="26" height="18" viewBox="0 0 26 18"><circle cx="5" cy="6" r="3" fill="#30e030"/><rect x="3" y="8" width="4" height="8" fill="#30d030"/><rect x="9" y="1" width="4" height="10" fill="#30e030"/><path d="M14 6L20 9M14 12H20" stroke="#e0e0e0"/><path d="M20 17H25V12Z" fill="#f0f0f0"/></svg><svg class="a" style="left:42px;top:584px;" width="26" height="18" viewBox="0 0 26 18"><path d="M1 8L10 3L19 8L10 13Z" fill="none" stroke="#e08030" stroke-width="1.5"/><path d="M6 8H14" stroke="#f02020" stroke-width="2"/><path d="M20 17H25V12Z" fill="#f0f0f0"/></svg><svg class="a" style="left:42px;top:604px;" width="26" height="18" viewBox="0 0 26 18"><path d="M1 2V7M20 2V7M1 4H20" stroke="#e09030" stroke-width="2"/><path d="M1 9H10V12H20V16H1Z" fill="#f8f8f8" stroke="#000"/><path d="M20 17H25V12Z" fill="#f0f0f0"/></svg><svg class="a" style="left:42px;top:633px;" width="26" height="18" viewBox="0 0 26 18"><rect x="1" y="4" width="13" height="11" fill="none" stroke="#e09030" stroke-width="2"/><path d="M7 1H20V12" stroke="#e09030" stroke-dasharray="2 2" fill="none"/><path d="M20 17H25V12Z" fill="#f0f0f0"/></svg><svg class="a" style="left:42px;top:653px;" width="26" height="18" viewBox="0 0 26 18"><rect x="1" y="2" width="19" height="13" fill="#1010c0"/><rect x="3" y="3" width="15" height="11" fill="#f8f8f8"/><path d="M6 5H15M10 5V12" stroke="#1020d0" stroke-width="2"/><path d="M20 17H25V12Z" fill="#f0f0f0"/></svg><svg class="a" style="left:42px;top:671px;" width="26" height="18" viewBox="0 0 26 18"><path d="M1 12L8 7L14 10L20 4" stroke="#5090d0" stroke-width="1.5" fill="none"/><circle cx="4" cy="10" r="2" fill="#50a0e0"/><circle cx="12" cy="9" r="2" fill="#50a0e0"/><path d="M20 17H25V12Z" fill="#f0f0f0"/></svg><svg class="a" style="left:42px;top:699px;" width="26" height="18" viewBox="0 0 26 18"><path d="M2 4L11 1V15L2 16Z" fill="#d01030"/><path d="M11 4H20V15H11Z" fill="#e8e8e8"/><path d="M20 17H25V12Z" fill="#f0f0f0"/></svg><svg class="a" style="left:42px;top:719px;" width="26" height="18" viewBox="0 0 26 18"><rect x="1" y="3" width="19" height="12" fill="#101010"/><rect x="2" y="4" width="17" height="4" fill="#f0f0f0"/><rect x="2" y="9" width="8" height="5" fill="#e8e8e8"/><rect x="11" y="9" width="8" height="5" fill="#e8e8e8"/><path d="M20 17H25V12Z" fill="#f0f0f0"/></svg><svg class="a" style="left:42px;top:746px;" width="26" height="18" viewBox="0 0 26 18"><path d="M2 15L6 5H12M8 11C12 6 16 4 20 4" stroke="#e09030" stroke-width="1.5" fill="none"/><path d="M20 17H25V12Z" fill="#f0f0f0"/></svg><svg class="a" style="left:42px;top:767px;" width="26" height="18" viewBox="0 0 26 18"><path d="M2 15L8 6L14 11L20 3" stroke="#2060c0" stroke-width="1" fill="none"/><circle cx="8" cy="6" r="2" fill="#f02020"/><circle cx="14" cy="11" r="2" fill="#f02020"/><path d="M20 17H25V12Z" fill="#f0f0f0"/></svg><svg class="a" style="left:42px;top:786px;" width="26" height="18" viewBox="0 0 26 18"><path d="M1 11H20" stroke="#e09030" stroke-width="1.5"/><path d="M10 3V14" stroke="#3080e0" stroke-width="1.5" stroke-dasharray="2 1"/><circle cx="3" cy="11" r="2" fill="#f02020"/><path d="M20 17H25V12Z" fill="#f0f0f0"/></svg><svg class="a" style="left:42px;top:807px;" width="26" height="18" viewBox="0 0 26 18"><text x="0" y="10" font-size="9" font-family="Liberation Sans" font-weight="bold" fill="#e09030">11.5</text><path d="M1 14L20 9" stroke="#c0c0e0" stroke-width="1.5"/><path d="M20 17H25V12Z" fill="#f0f0f0"/></svg><svg class="a" style="left:42px;top:827px;" width="26" height="18" viewBox="0 0 26 18"><rect x="1" y="1" width="20" height="15" fill="#d8e0c8"/><rect x="1" y="1" width="20" height="4" fill="#60b080"/><path d="M6 10H12V6L18 10L12 14V11H6Z" fill="#20a0d0"/><path d="M20 17H25V12Z" fill="#f0f0f0"/></svg><svg class="a" style="left:42px;top:848px;" width="26" height="18" viewBox="0 0 26 18"><path d="M2 15L10 3H20V15Z" fill="none" stroke="#3080d0" stroke-width="1.5"/><path d="M2 15H20" stroke="#e09030" stroke-width="2"/><path d="M20 17H25V12Z" fill="#f0f0f0"/></svg><svg class="a" style="left:42px;top:868px;" width="26" height="18" viewBox="0 0 26 18"><path d="M1 4H20M4 4V16M16 4V16M1 8H20" stroke="#e09030" stroke-width="2"/><path d="M20 17H25V12Z" fill="#f0f0f0"/></svg><svg class="a" style="left:42px;top:888px;" width="26" height="18" viewBox="0 0 26 18"><path d="M3 15L10 3L17 15Z" fill="none" stroke="#e09030" stroke-width="2"/><path d="M6 9H15" stroke="#e02020" stroke-width="2"/><path d="M20 17H25V12Z" fill="#f0f0f0"/></svg><div class="a" style="left:42px;top:311px;width:24px;height:2px;background:#c8c8c8;"></div><div class="a" style="left:42px;top:337px;width:24px;height:2px;background:#c8c8c8;"></div><div class="a" style="left:42px;top:404px;width:24px;height:2px;background:#c8c8c8;"></div><div class="a" style="left:42px;top:472px;width:24px;height:2px;background:#c8c8c8;"></div><div class="a" style="left:42px;top:560px;width:24px;height:2px;background:#c8c8c8;"></div><div class="a" style="left:42px;top:627px;width:24px;height:2px;background:#c8c8c8;"></div><div class="a" style="left:42px;top:694px;width:24px;height:2px;background:#c8c8c8;"></div><div class="a" style="left:42px;top:741px;width:24px;height:2px;background:#c8c8c8;"></div><div class="a" style="left:3px;top:789px;width:29px;height:3px;background:#22262e;"></div><div class="a" style="left:8px;top:794px;width:19px;height:2px;background:#70747c;"></div><svg class="a" style="left:7px;top:915px;" width="22" height="4" viewBox="0 0 22 4"><path d="M0 1H22M0 3H22" stroke="#b8bcc8" stroke-width="1" stroke-dasharray="2 1"/></svg><svg class="a" style="left:9px;top:925px;" width="16" height="14" viewBox="0 0 16 14"><path d="M2 2L14 12M14 2L2 12" stroke="#e8e8e8" stroke-width="2"/></svg><svg class="a" style="left:7px;top:945px;" width="20" height="18" viewBox="0 0 20 18"><path d="M2 16L12 6" stroke="#d8d8d8" stroke-width="3"/><path d="M10 8C9 3 13 1 17 2L14 5L16 7L19 4C20 8 16 11 12 10Z" fill="#d8d8d8"/></svg><svg class="a" style="left:0px;top:0px;pointer-events:none" width="1920" height="1080" viewBox="0 0 1920 1080"><ellipse cx="997" cy="420" rx="78" ry="58" fill="none" stroke="#22b0b4" stroke-width="1.7"/><rect x="957" y="556" width="221" height="95" fill="none" stroke="#22b0b4" stroke-width="1.7"/><path d="M960.5 721.5H1298.5L1181.5 815.5H960.5Z" fill="none" stroke="#22b0b4" stroke-width="1.7"/><path d="M1341 457L1447 411.5H1595L1629 471L1630 539.5L1436 569" fill="none" stroke="#22b0b4" stroke-width="1.7"/><path d="M1464 616.5H1747V754H1555" fill="none" stroke="#22b0b4" stroke-width="1.7"/><g transform="translate(938.9 428) scale(1.3 1)" fill="#f01010" font-family="Liberation Sans" font-weight="bold"><text x="0" y="0" font-size="23">4.<tspan font-size="15">42</tspan><tspan dx="7.2" font-size="22">m</tspan><tspan dx="1.5" dy="-8" font-size="12">2</tspan></text></g><g transform="translate(1056.1 517) scale(1.3 1)" fill="#f01010" font-family="Liberation Sans" font-weight="bold"><text x="0" y="0" font-size="23">19.<tspan font-size="15">09</tspan><tspan dx="7.2" font-size="22">m</tspan><tspan dx="1.5" dy="-8" font-size="12">2</tspan></text></g><g transform="translate(1008.9 611.5) scale(1.3 1)" fill="#f01010" font-family="Liberation Sans" font-weight="bold"><text x="0" y="0" font-size="23">6.<tspan font-size="15">47</tspan><tspan dx="7.2" font-size="22">m</tspan><tspan dx="1.5" dy="-8" font-size="12">2</tspan></text></g><g transform="translate(1044.5 773.5) scale(1.3 1)" fill="#f01010" font-family="Liberation Sans" font-weight="bold"><text x="0" y="0" font-size="23">8.<tspan font-size="15">20</tspan><tspan dx="7.2" font-size="22">m</tspan><tspan dx="1.5" dy="-8" font-size="12">2</tspan></text></g><g transform="translate(1476.8 404.5) scale(1.3 1)" fill="#f01010" font-family="Liberation Sans" font-weight="bold"><text x="0" y="0" font-size="22">2.<tspan dx="1" dy="-6.5" font-size="15">24</tspan><tspan dx="5.6" dy="7.5" font-size="22">m</tspan></text></g><g transform="translate(1560 609.5) scale(1.3 1)" fill="#f01010" font-family="Liberation Sans" font-weight="bold"><text x="0" y="0" font-size="22">4.<tspan dx="1" dy="-6.5" font-size="15">31</tspan><tspan dx="5.6" dy="7.5" font-size="22">m</tspan></text></g><g transform="translate(1606.8 776) scale(1.3 1)" fill="#f01010" font-family="Liberation Sans" font-weight="bold"><text x="0" y="0" font-size="22">2.<tspan dx="1" dy="-6.5" font-size="15">91</tspan><tspan dx="5.6" dy="7.5" font-size="22">m</tspan></text></g><g transform="translate(1660 539.4) scale(1.3 1) rotate(-90)" fill="#f01010" font-family="Liberation Sans" font-weight="bold"><text x="0" y="0" font-size="22">1.<tspan dx="1" dy="-6.5" font-size="15">90</tspan><tspan dx="5.6" dy="7.5" font-size="22">m</tspan></text></g><g transform="translate(1778 718.6) scale(1.3 1) rotate(-90)" fill="#f01010" font-family="Liberation Sans" font-weight="bold"><text x="0" y="0" font-size="22">2.<tspan dx="1" dy="-6.5" font-size="15">80</tspan><tspan dx="5.6" dy="7.5" font-size="22">m</tspan></text></g><g transform="translate(1350.4 447.5) scale(1.3 1) rotate(-29.6)" fill="#f01010" font-family="Liberation Sans" font-weight="bold"><text x="0" y="0" font-size="22">1.<tspan dx="1" dy="-6.5" font-size="15">86</tspan><tspan dx="5.6" dy="7.5" font-size="22">m</tspan></text></g><g transform="translate(1598.7 407.2) scale(1.3 1) rotate(66.3)" fill="#f01010" font-family="Liberation Sans" font-weight="bold"><text x="0" y="0" font-size="22">1.<tspan dx="1" dy="-6.5" font-size="15">34</tspan><tspan dx="5.6" dy="7.5" font-size="22">m</tspan></text></g><g transform="translate(1494.8 584.7) scale(1.3 1) rotate(-11.25)" fill="#f01010" font-family="Liberation Sans" font-weight="bold"><text x="0" y="0" font-size="22">3.<tspan dx="1" dy="-6.5" font-size="15">01</tspan><tspan dx="5.6" dy="7.5" font-size="22">m</tspan></text></g><path d="M96 845V889H158" stroke="#d8d8d8" stroke-width="1.5" fill="none"/><rect x="90" y="883" width="12" height="11" fill="none" stroke="#d8d8d8" stroke-width="1.5"/><path d="M99 828L105 835L111 828M105 835V843" stroke="#c8c8c8" stroke-width="1.8" fill="none"/><path d="M164 877L178 890M178 877L164 890" stroke="#c8c8c8" stroke-width="1.8"/><ellipse cx="1856.5" cy="351" rx="62" ry="46" fill="none" stroke="#5a5e68" stroke-width="13"/><rect x="1828" y="330" width="58" height="43" fill="#c8ccd0"/><text x="1857" y="356" font-family="Liberation Sans" font-size="10" fill="#707478" text-anchor="middle">평면도</text><text x="1856" y="308" font-family="Liberation Sans" font-size="15" fill="#c0c4c8" text-anchor="middle">북</text><text x="1790" y="358" font-family="Liberation Sans" font-size="15" fill="#c0c4c8" text-anchor="middle">서</text><text x="1856" y="408" font-family="Liberation Sans" font-size="15" fill="#c0c4c8" text-anchor="middle">남</text><text x="1922" y="358" font-family="Liberation Sans" font-size="15" fill="#c0c4c8" text-anchor="middle">동</text><rect x="1828" y="429" width="58" height="16" rx="6" fill="#9a9ea4"/><text x="1847" y="441" font-family="Liberation Sans" font-size="10" fill="#606468" text-anchor="middle">WCS</text></svg><div class="a" style="left:33px;top:912px;width:1887px;height:35px;overflow:hidden;font-family:'Liberation Mono',monospace;font-size:14px;color:#1c1c1c;line-height:14px;white-space:nowrap"><div style="position:absolute;left:5px;top:-8px"><span style="display:inline-block;width:16.26px;text-align:center">명</span><span style="display:inline-block;width:16.26px;text-align:center">령</span><span style="display:inline-block;width:8.13px;text-align:center">:</span><span style="display:inline-block;width:8.13px"></span><span style="display:inline-block;width:16.26px;text-align:center">반</span><span style="display:inline-block;width:16.26px;text-align:center">대</span><span style="display:inline-block;width:8.13px"></span><span style="display:inline-block;width:16.26px;text-align:center">구</span><span style="display:inline-block;width:16.26px;text-align:center">석</span><span style="display:inline-block;width:8.13px"></span><span style="display:inline-block;width:16.26px;text-align:center">지</span><span style="display:inline-block;width:16.26px;text-align:center">정</span><span style="display:inline-block;width:8.13px"></span><span style="display:inline-block;width:16.26px;text-align:center">또</span><span style="display:inline-block;width:16.26px;text-align:center">는</span><span style="display:inline-block;width:8.13px"></span><span style="display:inline-block;width:8.13px;text-align:center">[</span><span style="display:inline-block;width:16.26px;text-align:center">울</span><span style="display:inline-block;width:16.26px;text-align:center">타</span><span style="display:inline-block;width:16.26px;text-align:center">리</span><span style="display:inline-block;width:8.13px;text-align:center">(</span><span style="display:inline-block;width:8.13px;text-align:center">F</span><span style="display:inline-block;width:8.13px;text-align:center">)</span><span style="display:inline-block;width:8.13px;text-align:center">/</span><span style="display:inline-block;width:16.26px;text-align:center">윈</span><span style="display:inline-block;width:16.26px;text-align:center">도</span><span style="display:inline-block;width:16.26px;text-align:center">우</span><span style="display:inline-block;width:16.26px;text-align:center">폴</span><span style="display:inline-block;width:16.26px;text-align:center">리</span><span style="display:inline-block;width:16.26px;text-align:center">곤</span><span style="display:inline-block;width:8.13px;text-align:center">(</span><span style="display:inline-block;width:8.13px;text-align:center">W</span><span style="display:inline-block;width:8.13px;text-align:center">P</span><span style="display:inline-block;width:8.13px;text-align:center">)</span><span style="display:inline-block;width:8.13px;text-align:center">/</span><span style="display:inline-block;width:16.26px;text-align:center">걸</span><span style="display:inline-block;width:16.26px;text-align:center">침</span><span style="display:inline-block;width:16.26px;text-align:center">폴</span><span style="display:inline-block;width:16.26px;text-align:center">리</span><span style="display:inline-block;width:16.26px;text-align:center">곤</span><span style="display:inline-block;width:8.13px;text-align:center">(</span><span style="display:inline-block;width:8.13px;text-align:center">C</span><span style="display:inline-block;width:8.13px;text-align:center">P</span><span style="display:inline-block;width:8.13px;text-align:center">)</span><span style="display:inline-block;width:8.13px;text-align:center">]</span><span style="display:inline-block;width:8.13px;text-align:center">:</span></div><div style="position:absolute;left:5px;top:6px"><span style="display:inline-block;width:16.26px;text-align:center">명</span><span style="display:inline-block;width:16.26px;text-align:center">령</span><span style="display:inline-block;width:8.13px;text-align:center">:</span><span style="display:inline-block;width:8.13px"></span><span style="display:inline-block;width:16.26px;text-align:center">반</span><span style="display:inline-block;width:16.26px;text-align:center">대</span><span style="display:inline-block;width:8.13px"></span><span style="display:inline-block;width:16.26px;text-align:center">구</span><span style="display:inline-block;width:16.26px;text-align:center">석</span><span style="display:inline-block;width:8.13px"></span><span style="display:inline-block;width:16.26px;text-align:center">지</span><span style="display:inline-block;width:16.26px;text-align:center">정</span><span style="display:inline-block;width:8.13px"></span><span style="display:inline-block;width:16.26px;text-align:center">또</span><span style="display:inline-block;width:16.26px;text-align:center">는</span><span style="display:inline-block;width:8.13px"></span><span style="display:inline-block;width:8.13px;text-align:center">[</span><span style="display:inline-block;width:16.26px;text-align:center">울</span><span style="display:inline-block;width:16.26px;text-align:center">타</span><span style="display:inline-block;width:16.26px;text-align:center">리</span><span style="display:inline-block;width:8.13px;text-align:center">(</span><span style="display:inline-block;width:8.13px;text-align:center">F</span><span style="display:inline-block;width:8.13px;text-align:center">)</span><span style="display:inline-block;width:8.13px;text-align:center">/</span><span style="display:inline-block;width:16.26px;text-align:center">윈</span><span style="display:inline-block;width:16.26px;text-align:center">도</span><span style="display:inline-block;width:16.26px;text-align:center">우</span><span style="display:inline-block;width:16.26px;text-align:center">폴</span><span style="display:inline-block;width:16.26px;text-align:center">리</span><span style="display:inline-block;width:16.26px;text-align:center">곤</span><span style="display:inline-block;width:8.13px;text-align:center">(</span><span style="display:inline-block;width:8.13px;text-align:center">W</span><span style="display:inline-block;width:8.13px;text-align:center">P</span><span style="display:inline-block;width:8.13px;text-align:center">)</span><span style="display:inline-block;width:8.13px;text-align:center">/</span><span style="display:inline-block;width:16.26px;text-align:center">걸</span><span style="display:inline-block;width:16.26px;text-align:center">침</span><span style="display:inline-block;width:16.26px;text-align:center">폴</span><span style="display:inline-block;width:16.26px;text-align:center">리</span><span style="display:inline-block;width:16.26px;text-align:center">곤</span><span style="display:inline-block;width:8.13px;text-align:center">(</span><span style="display:inline-block;width:8.13px;text-align:center">C</span><span style="display:inline-block;width:8.13px;text-align:center">P</span><span style="display:inline-block;width:8.13px;text-align:center">)</span><span style="display:inline-block;width:8.13px;text-align:center">]</span><span style="display:inline-block;width:8.13px;text-align:center">:</span></div><div style="position:absolute;left:5px;top:20px"><span style="display:inline-block;width:16.26px;text-align:center">명</span><span style="display:inline-block;width:16.26px;text-align:center">령</span><span style="display:inline-block;width:8.13px;text-align:center">:</span><span style="display:inline-block;width:8.13px"></span><span style="display:inline-block;width:8.13px;text-align:center">*</span><span style="display:inline-block;width:16.26px;text-align:center">취</span><span style="display:inline-block;width:16.26px;text-align:center">소</span><span style="display:inline-block;width:8.13px;text-align:center">*</span></div></div><svg class="a" style="left:38px;top:951px;" width="30" height="13" viewBox="0 0 30 13"><rect x="1" y="1" width="19" height="11" fill="#f8f8f8" stroke="#404040" stroke-width="1.2"/><rect x="1" y="1" width="19" height="2" fill="#404040"/><path d="M4 5L7 7L4 9" stroke="#404040" fill="none"/><path d="M24 5H30L27 9Z" fill="#404040"/></svg><svg class="a" style="left:22px;top:976px;" width="22" height="13" viewBox="0 0 22 13"><path d="M0 1.5H21M0 6.5H21M0 11.5H21" stroke="#e8e8e8" stroke-width="2.2"/></svg><svg class="a" style="left:55px;top:971px;" width="72" height="22" viewBox="0 0 72 22"><path d="M12 0H72L60 22H0Z" fill="#3e424c"/></svg><svg class="a" style="left:184px;top:974px;" width="8" height="16" viewBox="0 0 8 16"><path d="M7 1L1 15" stroke="#5a5e68"/></svg><svg class="a" style="left:253px;top:974px;" width="8" height="16" viewBox="0 0 8 16"><path d="M7 1L1 15" stroke="#5a5e68"/></svg><svg class="a" style="left:274px;top:975px;" width="18" height="16" viewBox="0 0 18 16"><path d="M9 0V16M1 8H17" stroke="#e8e8e8" stroke-width="2.2"/></svg><svg class="a" style="left:306px;top:974px;" width="8" height="16" viewBox="0 0 8 16"><path d="M7 1L1 15" stroke="#5a5e68"/></svg><div class="a" style="left:860px;top:971px;width:1060px;height:22px;background:#262b36;"></div><div class="a" style="left:880px;top:972px;width:78px;height:20px;background:#2e333e;"></div><div class="a" style="left:1182px;top:973px;width:1px;height:18px;background:#22262e;"></div><div class="a" style="left:1225px;top:973px;width:1px;height:18px;background:#22262e;"></div><svg class="a" style="left:1231px;top:974px;" width="20" height="16" viewBox="0 0 20 16"><path d="M6 1V15M13 1V15M1 5H19M1 11H19" stroke="#d8d8d8" stroke-width="2"/></svg><svg class="a" style="left:1263px;top:975px;" width="18" height="14" viewBox="0 0 18 14"><path d="M1 2h2M8 2h2M15 2h2M1 7h2M8 7h2M15 7h2M1 12h2M8 12h2M15 12h2" stroke="#d0d0d0" stroke-width="2"/></svg><svg class="a" style="left:1293px;top:981px;" width="6" height="4" viewBox="0 0 6 4"><path d="M0 0H6L3 3Z" fill="#d0d0d0"/></svg><div class="a" style="left:1310px;top:972px;width:30px;height:20px;background:#5b8ecf;"></div><svg class="a" style="left:1312px;top:974px;" width="26" height="16" viewBox="0 0 26 16"><path d="M5 1V9M1 5H9" stroke="#ffffff" stroke-width="1.5"/><rect x="9" y="9" width="15" height="5" fill="#ffffff"/></svg><svg class="a" style="left:1344px;top:973px;" width="24" height="18" viewBox="0 0 24 18"><path d="M3 1V16H22" stroke="#d0d0d0" stroke-width="1.5" fill="none"/><path d="M3 10H9V16" stroke="#d0d0d0" fill="none"/></svg><div class="a" style="left:1372px;top:972px;width:28px;height:20px;background:#5b8ecf;"></div><svg class="a" style="left:1374px;top:974px;" width="24" height="16" viewBox="0 0 24 16"><circle cx="10" cy="9" r="6" fill="none" stroke="#ffffff" stroke-width="2"/><path d="M8 11L20 3" stroke="#ffffff" stroke-width="2"/></svg><svg class="a" style="left:1408px;top:981px;" width="6" height="4" viewBox="0 0 6 4"><path d="M0 0H6L3 3Z" fill="#d0d0d0"/></svg><svg class="a" style="left:1428px;top:973px;" width="20" height="18" viewBox="0 0 20 18"><path d="M4 2L16 16" stroke="#c04040" stroke-width="1.5"/><path d="M10 1V17" stroke="#c0c0c0" stroke-width="1"/></svg><svg class="a" style="left:1457px;top:981px;" width="6" height="4" viewBox="0 0 6 4"><path d="M0 0H6L3 3Z" fill="#d0d0d0"/></svg><svg class="a" style="left:1477px;top:973px;" width="22" height="18" viewBox="0 0 22 18"><path d="M1 16H21M1 16L17 4" stroke="#d0d0d0" stroke-width="1.5"/></svg><div class="a" style="left:1504px;top:972px;width:28px;height:20px;background:#5b8ecf;"></div><svg class="a" style="left:1506px;top:973px;" width="24" height="18" viewBox="0 0 24 18"><rect x="4" y="4" width="17" height="13" fill="none" stroke="#ffffff" stroke-width="1.5"/><rect x="1" y="1" width="6" height="6" fill="#5b8ecf" stroke="#ffffff"/></svg><svg class="a" style="left:1539px;top:981px;" width="6" height="4" viewBox="0 0 6 4"><path d="M0 0H6L3 3Z" fill="#d0d0d0"/></svg><div class="a" style="left:1553px;top:973px;width:1px;height:18px;background:#22262e;"></div><div class="a" style="left:1557px;top:972px;width:27px;height:20px;background:#5b8ecf;"></div><svg class="a" style="left:1559px;top:973px;" width="24" height="18" viewBox="0 0 24 18"><path d="M12 6L3 17M12 6L21 17M12 6V17" stroke="#ffffff" stroke-width="2.5"/><circle cx="18" cy="5" r="3" fill="none" stroke="#ffffff" stroke-width="1.5"/></svg><svg class="a" style="left:1590px;top:973px;" width="21" height="18" viewBox="0 0 21 18"><path d="M10 7L2 17M10 7L19 17M10 7V17" stroke="#e0e0e0" stroke-width="2.5"/><path d="M13 2L19 8M19 2L13 8" stroke="#e0e0e0" stroke-width="1.5"/></svg><svg class="a" style="left:1621px;top:973px;" width="21" height="18" viewBox="0 0 21 18"><path d="M10 5L2 17M10 5L19 17M10 5V17" stroke="#e0e0e0" stroke-width="2.5"/></svg><svg class="a" style="left:1686px;top:981px;" width="6" height="4" viewBox="0 0 6 4"><path d="M0 0H6L3 3Z" fill="#d0d0d0"/></svg><div class="a" style="left:1700px;top:973px;width:1px;height:18px;background:#22262e;"></div><svg class="a" style="left:1707px;top:973px;" width="20" height="19" viewBox="0 0 20 19"><circle cx="10" cy="9.5" r="5" fill="none" stroke="#e0e0e0" stroke-width="3"/><path d="M10 1V4M10 15V18M1.5 9.5H4.5M15.5 9.5H18.5M4 3.5L6 5.5M14 13.5L16 15.5M4 15.5L6 13.5M14 5.5L16 3.5" stroke="#e0e0e0" stroke-width="2.5"/></svg><svg class="a" style="left:1740px;top:981px;" width="6" height="4" viewBox="0 0 6 4"><path d="M0 0H6L3 3Z" fill="#d0d0d0"/></svg><svg class="a" style="left:1758px;top:973px;" width="22" height="20" viewBox="0 0 22 20"><path d="M11 1V19M1 10H21" stroke="#e8e8e8" stroke-width="2.2"/></svg><svg class="a" style="left:1792px;top:973px;" width="22" height="19" viewBox="0 0 22 19"><rect x="1" y="1" width="8" height="7" fill="none" stroke="#d8d8d8" stroke-width="1.5"/><circle cx="17" cy="9" r="4" fill="none" stroke="#d8d8d8" stroke-width="1.5"/><path d="M5 11L1 18H9Z" fill="none" stroke="#d8d8d8" stroke-width="1.5"/></svg><div class="a" style="left:1822px;top:973px;width:1px;height:18px;background:#22262e;"></div><svg class="a" style="left:1828px;top:972px;" width="23" height="20" viewBox="0 0 23 20"><rect x="1" y="3" width="16" height="10" fill="#4aa0e0"/><path d="M3 6H15M3 9H13" stroke="#f0f0f0"/><path d="M1 13H14V19H1Z" fill="#f0c020"/><path d="M17 8L23 19H11Z" fill="#f8d020" stroke="#202020" stroke-width=".8"/></svg><svg class="a" style="left:1863px;top:972px;" width="21" height="20" viewBox="0 0 21 20"><rect x="1" y="2" width="19" height="13" fill="#c8ccd0"/><path d="M3 13L9 6L14 11L18 8" stroke="#808890" fill="none"/><path d="M14 9L20 19H8Z" fill="#f0c040"/></svg><svg class="a" style="left:1897px;top:972px;" width="23" height="20" viewBox="0 0 23 20"><path d="M4 3V17H21V10H12" stroke="#e0a040" stroke-width="1.5" fill="none"/><rect x="2" y="1" width="7" height="7" fill="none" stroke="#e0a040"/></svg><div class="t" style="left:408px;top:92.5px;height:18px;line-height:18px;font-size:14px;color:#d8d8d8;font-weight:normal;font-family:'Liberation Sans',sans-serif;transform:scaleX(1.1380);">2D 제도 &amp; 주석</div><div class="t" style="left:643px;top:92.0px;height:19px;line-height:19px;font-size:15px;color:#dcdcdc;font-weight:normal;font-family:'Liberation Sans',sans-serif;transform:scaleX(1.0534);">ZWCAD 2025 전문가용 - [Drawing1.dwg]</div><div class="t" style="left:20px;top:113.0px;height:16px;line-height:16px;font-size:13px;color:#a8a8ac;font-weight:normal;font-family:'Liberation Sans',sans-serif;transform:scaleX(1.1030);">파일(F)</div><div class="t" style="left:98px;top:113.0px;height:16px;line-height:16px;font-size:13px;color:#a8a8ac;font-weight:normal;font-family:'Liberation Sans',sans-serif;transform:scaleX(1.0613);">편집(E)</div><div class="t" style="left:175px;top:113.0px;height:16px;line-height:16px;font-size:13px;color:#a8a8ac;font-weight:normal;font-family:'Liberation Sans',sans-serif;transform:scaleX(1.0875);">뷰(V)</div><div class="t" style="left:240px;top:113.0px;height:16px;line-height:16px;font-size:13px;color:#a8a8ac;font-weight:normal;font-family:'Liberation Sans',sans-serif;transform:scaleX(1.1233);">삽입(I)</div><div class="t" style="left:313px;top:113.0px;height:16px;line-height:16px;font-size:13px;color:#a8a8ac;font-weight:normal;font-family:'Liberation Sans',sans-serif;transform:scaleX(1.1165);">형식(O)</div><div class="t" style="left:394px;top:113.0px;height:16px;line-height:16px;font-size:13px;color:#a8a8ac;font-weight:normal;font-family:'Liberation Sans',sans-serif;transform:scaleX(1.0796);">도구(T)</div><div class="t" style="left:471px;top:113.0px;height:16px;line-height:16px;font-size:13px;color:#a8a8ac;font-weight:normal;font-family:'Liberation Sans',sans-serif;transform:scaleX(1.1359);">그리기(K)</div><div class="t" style="left:565px;top:113.0px;height:16px;line-height:16px;font-size:13px;color:#a8a8ac;font-weight:normal;font-family:'Liberation Sans',sans-serif;transform:scaleX(1.1074);">심볼(S)</div><div class="t" style="left:644px;top:113.0px;height:16px;line-height:16px;font-size:13px;color:#a8a8ac;font-weight:normal;font-family:'Liberation Sans',sans-serif;transform:scaleX(1.1251);">문자 (T)</div><div class="t" style="left:726px;top:113.0px;height:16px;line-height:16px;font-size:13px;color:#a8a8ac;font-weight:normal;font-family:'Liberation Sans',sans-serif;transform:scaleX(1.1579);">치수(N)</div><div class="t" style="left:808px;top:113.0px;height:16px;line-height:16px;font-size:13px;color:#a8a8ac;font-weight:normal;font-family:'Liberation Sans',sans-serif;transform:scaleX(1.1429);">수정(M)</div><div class="t" style="left:885px;top:113.0px;height:16px;line-height:16px;font-size:13px;color:#a8a8ac;font-weight:normal;font-family:'Liberation Sans',sans-serif;transform:scaleX(1.1282);">보너스</div><div class="t" style="left:953px;top:113.0px;height:16px;line-height:16px;font-size:13px;color:#a8a8ac;font-weight:normal;font-family:'Liberation Sans',sans-serif;transform:scaleX(1.1294);">파라메트릭(P)</div><div class="t" style="left:1076px;top:113.0px;height:16px;line-height:16px;font-size:13px;color:#a8a8ac;font-weight:normal;font-family:'Liberation Sans',sans-serif;transform:scaleX(1.0220);">Express</div><div class="t" style="left:1155px;top:113.0px;height:16px;line-height:16px;font-size:13px;color:#a8a8ac;font-weight:normal;font-family:'Liberation Sans',sans-serif;transform:scaleX(1.1165);">조경(G)</div><div class="t" style="left:1234px;top:113.0px;height:16px;line-height:16px;font-size:13px;color:#a8a8ac;font-weight:normal;font-family:'Liberation Sans',sans-serif;transform:scaleX(1.0298);">XPress(X)</div><div class="t" style="left:1326px;top:113.0px;height:16px;line-height:16px;font-size:13px;color:#a8a8ac;font-weight:normal;font-family:'Liberation Sans',sans-serif;transform:scaleX(1.1345);">윈도우(W)</div><div class="t" style="left:1425px;top:113.0px;height:16px;line-height:16px;font-size:13px;color:#a8a8ac;font-weight:normal;font-family:'Liberation Sans',sans-serif;transform:scaleX(1.1394);">도움말(H)</div><div class="t" style="left:1514px;top:113.0px;height:16px;line-height:16px;font-size:13px;color:#a8a8ac;font-weight:normal;font-family:'Liberation Sans',sans-serif;transform:scaleX(1.1069);">BarShop</div><div class="t" style="left:20px;top:134.0px;height:18px;line-height:18px;font-size:14px;color:#b4b4b8;font-weight:normal;font-family:'Liberation Sans',sans-serif;transform:scaleX(0.9286);">홈</div><div class="t" style="left:59px;top:134.0px;height:18px;line-height:18px;font-size:14px;color:#b4b4b8;font-weight:normal;font-family:'Liberation Sans',sans-serif;transform:scaleX(1.0357);">삽입</div><div class="t" style="left:113px;top:134.0px;height:18px;line-height:18px;font-size:14px;color:#b4b4b8;font-weight:normal;font-family:'Liberation Sans',sans-serif;transform:scaleX(1.0357);">주석</div><div class="t" style="left:169px;top:134.0px;height:18px;line-height:18px;font-size:14px;color:#b4b4b8;font-weight:normal;font-family:'Liberation Sans',sans-serif;transform:scaleX(1.0429);">파라메트릭</div><div class="t" style="left:274px;top:134.0px;height:18px;line-height:18px;font-size:14px;color:#b4b4b8;font-weight:normal;font-family:'Liberation Sans',sans-serif;transform:scaleX(0.7857);">뷰</div><div class="t" style="left:308px;top:134.0px;height:18px;line-height:18px;font-size:14px;color:#b4b4b8;font-weight:normal;font-family:'Liberation Sans',sans-serif;transform:scaleX(0.9643);">관리</div><div class="t" style="left:363px;top:134.0px;height:18px;line-height:18px;font-size:14px;color:#b4b4b8;font-weight:normal;font-family:'Liberation Sans',sans-serif;transform:scaleX(1.0000);">출력</div><div class="t" style="left:419px;top:134.0px;height:18px;line-height:18px;font-size:14px;color:#b4b4b8;font-weight:normal;font-family:'Liberation Sans',sans-serif;transform:scaleX(1.0352);">공동 작업</div><div class="t" style="left:508px;top:134.0px;height:18px;line-height:18px;font-size:14px;color:#b4b4b8;font-weight:normal;font-family:'Liberation Sans',sans-serif;transform:scaleX(1.0126);">Express Tools</div><div class="t" style="left:621px;top:134.0px;height:18px;line-height:18px;font-size:14px;color:#b4b4b8;font-weight:normal;font-family:'Liberation Sans',sans-serif;transform:scaleX(1.0613);">주요 응용프로그램</div><div class="t" style="left:772px;top:134.0px;height:18px;line-height:18px;font-size:14px;color:#b4b4b8;font-weight:normal;font-family:'Liberation Sans',sans-serif;transform:scaleX(1.0000);">건축</div><div class="t" style="left:825px;top:134.0px;height:18px;line-height:18px;font-size:14px;color:#b4b4b8;font-weight:normal;font-family:'Liberation Sans',sans-serif;transform:scaleX(1.0357);">조경</div><div class="t" style="left:881px;top:134.0px;height:18px;line-height:18px;font-size:14px;color:#d8d8d8;font-weight:normal;font-family:'Liberation Sans',sans-serif;transform:scaleX(0.9086);">XPress</div><div class="t" style="left:947px;top:134.0px;height:18px;line-height:18px;font-size:14px;color:#b4b4b8;font-weight:normal;font-family:'Liberation Sans',sans-serif;transform:scaleX(1.0963);">Civil</div><div class="t" style="left:1001px;top:134.0px;height:18px;line-height:18px;font-size:14px;color:#b4b4b8;font-weight:normal;font-family:'Liberation Sans',sans-serif;transform:scaleX(1.0278);">BarShop</div><div class="t" style="left:65px;top:228.0px;height:16px;line-height:16px;font-size:13px;color:#bcbcbc;font-weight:normal;font-family:'Liberation Sans',sans-serif;transform:scaleX(1.1529);">Tools</div><div class="t" style="left:215px;top:228.0px;height:16px;line-height:16px;font-size:13px;color:#bcbcbc;font-weight:normal;font-family:'Liberation Sans',sans-serif;transform:scaleX(1.1154);">유틸리티</div><div class="t" style="left:354px;top:228.0px;height:16px;line-height:16px;font-size:13px;color:#bcbcbc;font-weight:normal;font-family:'Liberation Sans',sans-serif;transform:scaleX(1.1154);">칫수관리</div><div class="t" style="left:495px;top:228.0px;height:16px;line-height:16px;font-size:13px;color:#bcbcbc;font-weight:normal;font-family:'Liberation Sans',sans-serif;transform:scaleX(1.0769);">그리기</div><div class="t" style="left:640px;top:228.0px;height:16px;line-height:16px;font-size:13px;color:#bcbcbc;font-weight:normal;font-family:'Liberation Sans',sans-serif;transform:scaleX(1.1366);">도면층 관리</div><div class="t" style="left:794px;top:228.0px;height:16px;line-height:16px;font-size:13px;color:#bcbcbc;font-weight:normal;font-family:'Liberation Sans',sans-serif;transform:scaleX(1.1326);">블록 관리</div><div class="t" style="left:934px;top:228.0px;height:16px;line-height:16px;font-size:13px;color:#bcbcbc;font-weight:normal;font-family:'Liberation Sans',sans-serif;transform:scaleX(1.1146);">문자 관리</div><div class="t" style="left:1050px;top:228.0px;height:16px;line-height:16px;font-size:13px;color:#bcbcbc;font-weight:normal;font-family:'Liberation Sans',sans-serif;transform:scaleX(1.1639);">출력/도면분리</div><div class="t" style="left:1199px;top:228.0px;height:16px;line-height:16px;font-size:13px;color:#bcbcbc;font-weight:normal;font-family:'Liberation Sans',sans-serif;transform:scaleX(1.1220);">뷰포트 관리</div><div class="t" style="left:1337px;top:228.0px;height:16px;line-height:16px;font-size:13px;color:#bcbcbc;font-weight:normal;font-family:'Liberation Sans',sans-serif;transform:scaleX(1.1516);">복사/잘라내기</div><div class="t" style="left:1471px;top:228.0px;height:16px;line-height:16px;font-size:13px;color:#bcbcbc;font-weight:normal;font-family:'Liberation Sans',sans-serif;transform:scaleX(1.1326);">엑셀 연동</div><div class="t" style="left:1565px;top:228.0px;height:16px;line-height:16px;font-size:13px;color:#bcbcbc;font-weight:normal;font-family:'Liberation Sans',sans-serif;transform:scaleX(1.1394);">도면변환/검토</div><div class="t" style="left:1757px;top:228.0px;height:16px;line-height:16px;font-size:13px;color:#bcbcbc;font-weight:normal;font-family:'Liberation Sans',sans-serif;transform:scaleX(1.0627);">XPress 객체</div><div class="t" style="left:23.5px;top:193.0px;height:16px;line-height:16px;font-size:13px;color:#c4c4c4;font-weight:normal;font-family:'Liberation Sans',sans-serif;transform:scaleX(1.0513);">단축키</div><div class="t" style="left:22.5px;top:207.0px;height:16px;line-height:16px;font-size:13px;color:#c4c4c4;font-weight:normal;font-family:'Liberation Sans',sans-serif;transform:scaleX(1.1026);">관리자</div><div class="t" style="left:176.5px;top:193.0px;height:16px;line-height:16px;font-size:13px;color:#c4c4c4;font-weight:normal;font-family:'Liberation Sans',sans-serif;transform:scaleX(1.0261);">XPress</div><div class="t" style="left:176.5px;top:207.0px;height:16px;line-height:16px;font-size:13px;color:#c4c4c4;font-weight:normal;font-family:'Liberation Sans',sans-serif;transform:scaleX(1.1026);">계산기</div><div class="t" style="left:346.0px;top:193.0px;height:16px;line-height:16px;font-size:13px;color:#c4c4c4;font-weight:normal;font-family:'Liberation Sans',sans-serif;transform:scaleX(1.0769);">간편</div><div class="t" style="left:346.0px;top:207.0px;height:16px;line-height:16px;font-size:13px;color:#c4c4c4;font-weight:normal;font-family:'Liberation Sans',sans-serif;transform:scaleX(1.0769);">치수</div><div class="t" style="left:456.0px;top:193.0px;height:16px;line-height:16px;font-size:13px;color:#c4c4c4;font-weight:normal;font-family:'Liberation Sans',sans-serif;transform:scaleX(1.0769);">객체</div><div class="t" style="left:456.0px;top:207.0px;height:16px;line-height:16px;font-size:13px;color:#c4c4c4;font-weight:normal;font-family:'Liberation Sans',sans-serif;transform:scaleX(1.0769);">명령</div><div class="t" style="left:609.5px;top:193.0px;height:16px;line-height:16px;font-size:13px;color:#c4c4c4;font-weight:normal;font-family:'Liberation Sans',sans-serif;transform:scaleX(1.1026);">도면층</div><div class="t" style="left:617.0px;top:207.0px;height:16px;line-height:16px;font-size:13px;color:#c4c4c4;font-weight:normal;font-family:'Liberation Sans',sans-serif;transform:scaleX(1.0769);">관리</div><div class="t" style="left:780.0px;top:193.0px;height:16px;line-height:16px;font-size:13px;color:#c4c4c4;font-weight:normal;font-family:'Liberation Sans',sans-serif;transform:scaleX(1.0436);">BLOCK</div><div class="t" style="left:781.5px;top:207.0px;height:16px;line-height:16px;font-size:13px;color:#c4c4c4;font-weight:normal;font-family:'Liberation Sans',sans-serif;transform:scaleX(1.1026);">관리자</div><div class="t" style="left:906.0px;top:193.0px;height:16px;line-height:16px;font-size:13px;color:#c4c4c4;font-weight:normal;font-family:'Liberation Sans',sans-serif;transform:scaleX(1.0769);">문자</div><div class="t" style="left:906.0px;top:207.0px;height:16px;line-height:16px;font-size:13px;color:#c4c4c4;font-weight:normal;font-family:'Liberation Sans',sans-serif;transform:scaleX(1.0769);">사전</div><div class="t" style="left:1061.0px;top:193.0px;height:16px;line-height:16px;font-size:13px;color:#c4c4c4;font-weight:normal;font-family:'Liberation Sans',sans-serif;transform:scaleX(1.0769);">연속</div><div class="t" style="left:1061.0px;top:207.0px;height:16px;line-height:16px;font-size:13px;color:#c4c4c4;font-weight:normal;font-family:'Liberation Sans',sans-serif;transform:scaleX(1.0769);">출력</div><div class="t" style="left:1170.5px;top:193.0px;height:16px;line-height:16px;font-size:13px;color:#c4c4c4;font-weight:normal;font-family:'Liberation Sans',sans-serif;transform:scaleX(1.1026);">뷰포트</div><div class="t" style="left:1178.0px;top:207.0px;height:16px;line-height:16px;font-size:13px;color:#c4c4c4;font-weight:normal;font-family:'Liberation Sans',sans-serif;transform:scaleX(1.0769);">관리</div><div class="t" style="left:1340.5px;top:193.0px;height:16px;line-height:16px;font-size:13px;color:#c4c4c4;font-weight:normal;font-family:'Liberation Sans',sans-serif;transform:scaleX(1.1026);">경계선</div><div class="t" style="left:1348.0px;top:207.0px;height:16px;line-height:16px;font-size:13px;color:#c4c4c4;font-weight:normal;font-family:'Liberation Sans',sans-serif;transform:scaleX(1.0769);">복사</div><div class="t" style="left:1465.0px;top:193.0px;height:16px;line-height:16px;font-size:13px;color:#c4c4c4;font-weight:normal;font-family:'Liberation Sans',sans-serif;transform:scaleX(1.0769);">엑셀</div><div class="t" style="left:1465.0px;top:207.0px;height:16px;line-height:16px;font-size:13px;color:#c4c4c4;font-weight:normal;font-family:'Liberation Sans',sans-serif;transform:scaleX(1.0769);">연동</div><div class="t" style="left:1574.0px;top:193.0px;height:16px;line-height:16px;font-size:13px;color:#c4c4c4;font-weight:normal;font-family:'Liberation Sans',sans-serif;transform:scaleX(1.0769);">도면</div><div class="t" style="left:1574.0px;top:207.0px;height:16px;line-height:16px;font-size:13px;color:#c4c4c4;font-weight:normal;font-family:'Liberation Sans',sans-serif;transform:scaleX(1.0769);">변환</div><div class="t" style="left:1686px;top:192.0px;height:16px;line-height:16px;font-size:13px;color:#c4c4c4;font-weight:normal;font-family:'Liberation Sans',sans-serif;transform:scaleX(1.1026);">지시선</div><div class="t" style="left:57px;top:251.5px;height:19px;line-height:19px;font-size:15px;color:#1010e0;font-weight:bold;font-family:'Liberation Sans',sans-serif;transform:scaleX(1.0694);">아파트단위세대평면도B</div><div class="t" style="left:276px;top:252.0px;height:18px;line-height:18px;font-size:14px;color:#606060;font-weight:normal;font-family:'Liberation Sans',sans-serif;transform:scaleX(1.0502);">저두지구4</div><div class="t" style="left:78px;top:284.0px;height:16px;line-height:16px;font-size:13px;color:#c0c0c0;font-weight:normal;font-family:'Liberation Sans',sans-serif;transform:scaleX(1.1712);">[−][평면도][2D 와이어프레임]</div><div class="t" style="left:80px;top:948.5px;height:18px;line-height:18px;font-size:14px;color:#a0a0a0;font-weight:normal;font-family:'Liberation Sans',sans-serif;transform:scaleX(1.2022);font-style:italic;">명령 입력</div><div class="t" style="left:75px;top:974.5px;height:18px;line-height:18px;font-size:14px;color:#e0e0e0;font-weight:normal;font-family:'Liberation Sans',sans-serif;transform:scaleX(1.0357);">모형</div><div class="t" style="left:135px;top:974.5px;height:18px;line-height:18px;font-size:14px;color:#b8b8b8;font-weight:normal;font-family:'Liberation Sans',sans-serif;transform:scaleX(1.0336);">배치1</div><div class="t" style="left:204px;top:974.5px;height:18px;line-height:18px;font-size:14px;color:#b8b8b8;font-weight:normal;font-family:'Liberation Sans',sans-serif;transform:scaleX(1.0336);">배치2</div><div class="t" style="left:882px;top:974.5px;height:18px;line-height:18px;font-size:14px;color:#d8d8d8;font-weight:bold;font-family:'Liberation Sans',sans-serif;transform:scaleX(0.9673);">ArchiOffice</div><div class="t" style="left:994px;top:974.5px;height:18px;line-height:18px;font-size:14px;color:#d0d0d0;font-weight:normal;font-family:'Liberation Sans',sans-serif;transform:scaleX(1.0520);">226105.92, -57661.27, 0.00</div><div class="t" style="left:1189px;top:974.5px;height:18px;line-height:18px;font-size:14px;color:#d8d8d8;font-weight:normal;font-family:'Liberation Sans',sans-serif;transform:scaleX(1.0714);">모형</div><div class="t" style="left:1653px;top:974.5px;height:18px;line-height:18px;font-size:14px;color:#d8d8d8;font-weight:normal;font-family:'Liberation Sans',sans-serif;transform:scaleX(0.9908);">1:50</div></body></html>
